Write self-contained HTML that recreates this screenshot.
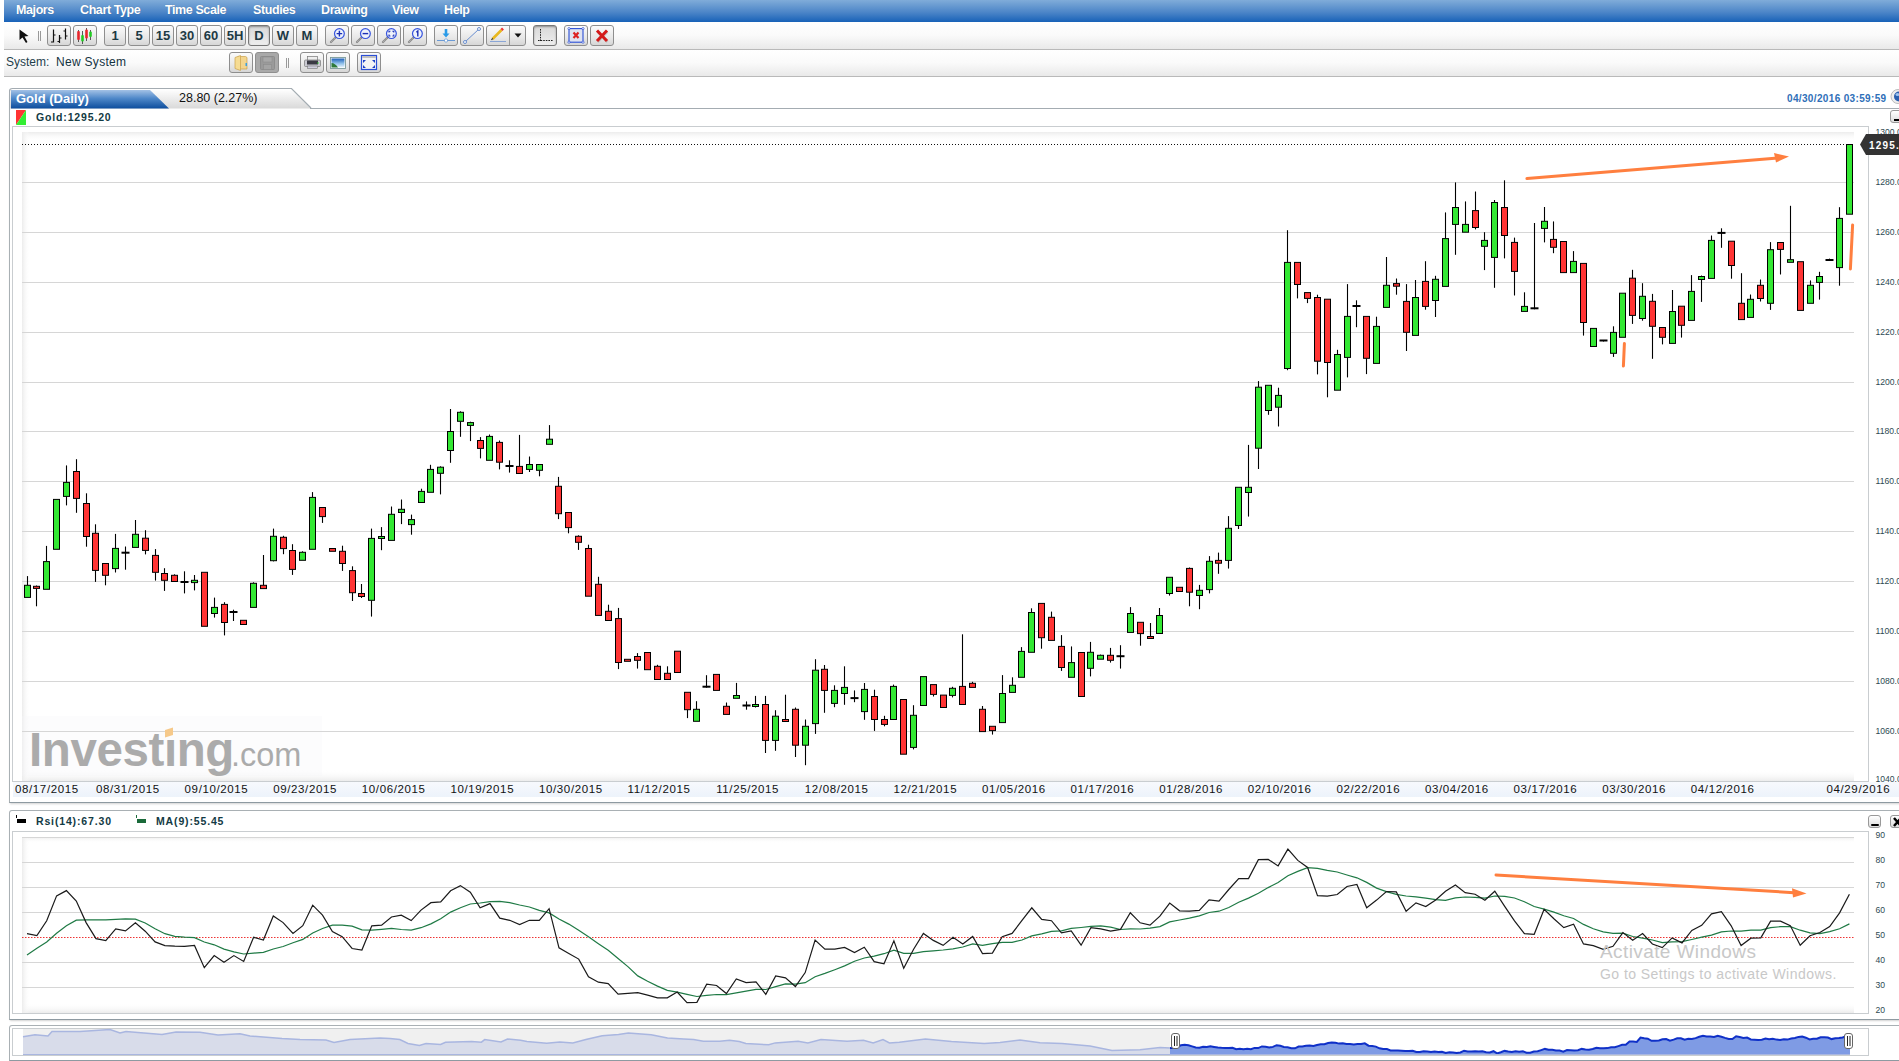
<!DOCTYPE html><html><head><meta charset="utf-8"><style>

*{margin:0;padding:0;box-sizing:border-box}
html,body{width:1899px;height:1061px;overflow:hidden;background:#fff;font-family:"Liberation Sans",sans-serif}
.a{position:absolute}
#menu{left:4px;top:0;width:1895px;height:22px;background:linear-gradient(#80acd9,#4d86c8 55%,#1862b8)}
#menu span{position:absolute;top:3px;color:#fff;font-weight:bold;font-size:12.5px;line-height:14px;letter-spacing:-0.4px;text-shadow:0 0 1px rgba(0,0,0,.25)}
.tb{left:4px;width:1895px;background:linear-gradient(#fff,#fafafa 50%,#e9e9e9);border-bottom:1px solid #b9b9b9}
.btn{position:absolute;height:20px;border:1px solid #8e8e8e;border-radius:3px;background:linear-gradient(#fbfbfb,#e8e8e8 60%,#d6d6d6);font-size:12px;color:#222;text-align:center;line-height:18px}
.btn.pr{background:linear-gradient(#d8d8d8,#eee);border-color:#777;box-shadow:inset 0 1px 2px rgba(0,0,0,.35)}
.sep{position:absolute;width:3px;height:10px;border-left:1px solid #999;border-right:1px solid #999}
.lbl{position:absolute;font-size:10px;color:#2d4f5a;line-height:10px}
.dt{position:absolute;top:783px;font-size:11.5px;color:#111;line-height:12px;letter-spacing:0.62px}

</style></head><body>
<div id="menu" class="a">
<span style="left:12px">Majors</span>
<span style="left:76px">Chart Type</span>
<span style="left:161px">Time Scale</span>
<span style="left:249px">Studies</span>
<span style="left:317px">Drawing</span>
<span style="left:388px">View</span>
<span style="left:440px">Help</span>
</div>
<div class="a tb" style="top:22px;height:28px"></div>
<svg class="a" style="left:18px;top:28px" width="14" height="16" viewBox="0 0 14 16"><path d="M1.5 1.5 L1.5 12 L4.5 9.5 L8 15 L9.5 14 L6.5 8.5 L10.5 8 Z" fill="#111"/></svg>
<div class="sep" style="left:38px;top:31px"></div>
<div class="btn" style="left:47px;top:25px;width:24px;height:21px;"><svg width="22" height="19" viewBox="0 0 22 19" style="display:block"><path d="M5.5 3.5v13M3 16h2.5M5.5 9h2M11.5 9v8M9.5 15.5h2M11.5 12h2M17.5 2.5v11M15.5 5h2M17.5 10h2" stroke="#111" stroke-width="1.2" fill="none"/></svg></div>
<div class="btn" style="left:73px;top:25px;width:24px;height:21px;"><svg width="22" height="19" viewBox="0 0 22 19" style="display:block"><path d="M4.5 4v12M8.5 5v13M12.5 2v13M16.5 4v10" stroke="#333" stroke-width=".8"/><rect x="3.2" y="5" width="2.6" height="9" rx="1" fill="#e8262b"/><rect x="7.2" y="9" width="2.6" height="6.5" rx="1" fill="#22cc22"/><rect x="11.2" y="3.5" width="2.6" height="9" rx="1" fill="#e8262b"/><rect x="15.2" y="5.5" width="2.6" height="5.5" rx="1" fill="#22cc22"/></svg></div>
<div class="btn" style="left:104px;top:25px;width:22px;height:21px;font-size:13px;font-weight:bold;line-height:19px;color:#1d3a44">1</div>
<div class="btn" style="left:128px;top:25px;width:22px;height:21px;font-size:13px;font-weight:bold;line-height:19px;color:#1d3a44">5</div>
<div class="btn" style="left:152px;top:25px;width:22px;height:21px;font-size:13px;font-weight:bold;line-height:19px;color:#1d3a44">15</div>
<div class="btn" style="left:176px;top:25px;width:22px;height:21px;font-size:13px;font-weight:bold;line-height:19px;color:#1d3a44">30</div>
<div class="btn" style="left:200px;top:25px;width:22px;height:21px;font-size:13px;font-weight:bold;line-height:19px;color:#1d3a44">60</div>
<div class="btn" style="left:224px;top:25px;width:22px;height:21px;font-size:13px;font-weight:bold;line-height:19px;color:#1d3a44">5H</div>
<div class="btn pr" style="left:248px;top:25px;width:22px;height:21px;font-size:13px;font-weight:bold;line-height:19px;color:#1d3a44">D</div>
<div class="btn" style="left:272px;top:25px;width:22px;height:21px;font-size:13px;font-weight:bold;line-height:19px;color:#1d3a44">W</div>
<div class="btn" style="left:296px;top:25px;width:22px;height:21px;font-size:13px;font-weight:bold;line-height:19px;color:#1d3a44">M</div>
<div class="btn" style="left:325px;top:25px;width:24px;height:21px;"><svg width="22" height="19" viewBox="0 0 22 19" style="display:block"><path d="M5 16 L9.5 11.5" stroke="#8a8a8a" stroke-width="2.2" stroke-linecap="round"/><path d="M5 16 L9.5 11.5" stroke="#ddd" stroke-width=".6" stroke-dasharray="1 1"/><circle cx="13.4" cy="7.6" r="4.9" fill="#eef2fb" stroke="#3553de" stroke-width="1.2"/><path d="M10.6 7.6h5.6M13.4 4.8v5.6" stroke="#1b2fb6" stroke-width="1.4"/></svg></div>
<div class="btn" style="left:351px;top:25px;width:24px;height:21px;"><svg width="22" height="19" viewBox="0 0 22 19" style="display:block"><path d="M5 16 L9.5 11.5" stroke="#8a8a8a" stroke-width="2.2" stroke-linecap="round"/><path d="M5 16 L9.5 11.5" stroke="#ddd" stroke-width=".6" stroke-dasharray="1 1"/><circle cx="13.4" cy="7.6" r="4.9" fill="#eef2fb" stroke="#3553de" stroke-width="1.2"/><path d="M10.6 7.6h5.6" stroke="#1b2fb6" stroke-width="1.4"/></svg></div>
<div class="btn" style="left:377px;top:25px;width:24px;height:21px;"><svg width="22" height="19" viewBox="0 0 22 19" style="display:block"><path d="M5 16 L9.5 11.5" stroke="#8a8a8a" stroke-width="2.2" stroke-linecap="round"/><path d="M5 16 L9.5 11.5" stroke="#ddd" stroke-width=".6" stroke-dasharray="1 1"/><circle cx="13.4" cy="7.6" r="4.9" fill="#eef2fb" stroke="#3553de" stroke-width="1.2"/><path d="M11 6.6v-1.4h1.4M14.4 5.2h1.4v1.4M15.8 8.6v1.4h-1.4M12.4 10h-1.4v-1.4" stroke="#1b2fb6" stroke-width="1.1" fill="none"/></svg></div>
<div class="btn" style="left:403px;top:25px;width:24px;height:21px;"><svg width="22" height="19" viewBox="0 0 22 19" style="display:block"><path d="M5 16 L9.5 11.5" stroke="#8a8a8a" stroke-width="2.2" stroke-linecap="round"/><path d="M5 16 L9.5 11.5" stroke="#ddd" stroke-width=".6" stroke-dasharray="1 1"/><circle cx="13.4" cy="7.6" r="4.9" fill="#eef2fb" stroke="#3553de" stroke-width="1.2"/><path d="M12.4 6.2 L13.8 5 V10.4" stroke="#1b2fb6" stroke-width="1.4" fill="none"/></svg></div>
<div class="btn" style="left:434px;top:25px;width:24px;height:21px;"><svg width="22" height="19" viewBox="0 0 22 19" style="display:block"><path d="M11 3v5" stroke="#2a9be8" stroke-width="2.6"/><path d="M7.5 7.5 L11 11.5 L14.5 7.5Z" fill="#2a9be8"/><path d="M2 14.5h18" stroke="#6a9ad6" stroke-width="1"/><rect x="9.5" y="13" width="3" height="3" rx="1" fill="#fff" stroke="#6a9ad6" stroke-width=".8"/></svg></div>
<div class="btn" style="left:460px;top:25px;width:24px;height:21px;"><svg width="22" height="19" viewBox="0 0 22 19"><path d="M4 16 L18 3" stroke="#6a8fd0" stroke-width="1"/><circle cx="4" cy="16" r="1.5" fill="#fff" stroke="#6a8fd0"/><circle cx="18" cy="3" r="1.5" fill="#fff" stroke="#6a8fd0"/></svg></div>
<div class="btn" style="left:486px;top:25px;width:40px;height:21px;position:absolute"><svg width="24" height="19" viewBox="0 0 24 19" style="position:absolute;left:0;top:0"><path d="M5.5 13 L14.5 4" stroke="#e8b820" stroke-width="2.6"/><path d="M14.5 4 L16 2.5" stroke="#e33" stroke-width="2.6"/><path d="M4.5 14 l1.2 -1.6" stroke="#333" stroke-width="1.2"/><path d="M3 15.5h16" stroke="#8aa6d6" stroke-width="1"/></svg><div style="position:absolute;left:22px;top:0;width:1px;height:19px;background:#999"></div><svg width="14" height="19" viewBox="0 0 14 19" style="position:absolute;left:24px;top:0"><path d="M3.5 7.5 L10.5 7.5 L7 11.5Z" fill="#111"/></svg></div>
<div class="btn pr" style="left:533px;top:25px;width:24px;height:21px;"><svg width="22" height="19" viewBox="0 0 22 19" style="display:block"><path d="M6.5 3v13M4 14.5h15" stroke="#222" stroke-width="1" stroke-dasharray="1.6 1"/></svg></div>
<div class="btn" style="left:564px;top:25px;width:24px;height:21px;"><svg width="22" height="19" viewBox="0 0 22 19" style="display:block"><rect x="4" y="2.6" width="14" height="13.6" fill="#dfe3f0" stroke="#2b4fd6" stroke-width="1.1"/><circle cx="4" cy="2.6" r="1.1" fill="#fff" stroke="#2b4fd6" stroke-width=".7"/><circle cx="18" cy="2.6" r="1.1" fill="#fff" stroke="#2b4fd6" stroke-width=".7"/><circle cx="4" cy="16.2" r="1.1" fill="#fff" stroke="#2b4fd6" stroke-width=".7"/><circle cx="18" cy="16.2" r="1.1" fill="#fff" stroke="#2b4fd6" stroke-width=".7"/><path d="M8.5 6.5 L13.5 12M13.5 6.5 L8.5 12" stroke="#d22" stroke-width="2.2"/></svg></div>
<div class="btn" style="left:590px;top:25px;width:24px;height:21px;"><svg width="22" height="19" viewBox="0 0 22 19" style="display:block"><path d="M6.5 5.5 L16.5 16M16.5 5.5 L6.5 16" stroke="#999" stroke-width="2.8" opacity=".35"/><path d="M6 4.5 L16 15M16 4.5 L6 15" stroke="#d41a1a" stroke-width="3"/></svg></div>
<div class="a tb" style="top:50px;height:27px"></div>
<div class="a" style="left:6px;top:56px;font-size:12px;color:#1f3f4c;line-height:13px">System:</div>
<div class="a" style="left:56px;top:56px;font-size:12px;color:#14333f;line-height:13px;letter-spacing:0.3px">New System</div>
<div class="btn" style="left:229px;top:52px;width:24px;height:21px;"><svg width="22" height="19" viewBox="0 0 22 19" style="display:block"><path d="M8 3.5h7.5l1.5 1v11.5H8Z" fill="#f3d58e" stroke="#c9a14a" stroke-width=".7"/><path d="M5 4.5 L10.5 2.5 V17.5 L5 15.5Z" fill="#f6dc93" stroke="#c9a14a" stroke-width=".7"/><rect x="15.5" y="10" width="1.5" height="3" fill="#3aa0e0"/></svg></div>
<div class="btn" style="left:255px;top:52px;width:24px;height:21px;background:#a9a9a9;border-color:#8f8f8f"><svg width="22" height="19" viewBox="0 0 22 19" style="display:block"><rect x="4.5" y="3.5" width="14" height="13" rx="1" fill="#9a9a9a" stroke="#888" stroke-width=".8"/><rect x="7" y="4" width="9" height="5" fill="#a8a8a8" stroke="#8c8c8c" stroke-width=".6"/><rect x="7.5" y="11.5" width="8" height="5" fill="#a4a4a4" stroke="#8c8c8c" stroke-width=".6"/></svg></div>
<div class="sep" style="left:286px;top:58px"></div>
<div class="btn" style="left:300px;top:52px;width:24px;height:21px;"><svg width="22" height="19" viewBox="0 0 22 19" style="display:block"><rect x="6.5" y="3.5" width="10" height="4" fill="#eee" stroke="#777" stroke-width=".7"/><rect x="3.5" y="7" width="16" height="6.5" rx="1" fill="#c9c9d2" stroke="#777" stroke-width=".7"/><rect x="6" y="7.5" width="11" height="4" fill="#3a3a44"/><circle cx="17" cy="10" r=".8" fill="#3c3"/><rect x="6.5" y="13" width="10" height="2.5" fill="#d0d0e0" stroke="#777" stroke-width=".6"/></svg></div>
<div class="btn" style="left:326px;top:52px;width:24px;height:21px;"><svg width="22" height="19" viewBox="0 0 22 19" style="display:block"><defs><linearGradient id="gimg" x1="0" y1="0" x2="0" y2="1"><stop offset="0" stop-color="#1d5fb8"/><stop offset=".55" stop-color="#8fc0ea"/><stop offset="1" stop-color="#e8f4fb"/></linearGradient></defs><rect x="3.5" y="4.5" width="15" height="11" fill="#fff" stroke="#7a9a9a" stroke-width=".9"/><rect x="4.5" y="5.5" width="13" height="9" fill="url(#gimg)"/><path d="M4.5 10 Q8 10 11 14.5 H4.5Z" fill="#2f7a3a"/></svg></div>
<div class="btn" style="left:357px;top:52px;width:24px;height:21px;"><svg width="22" height="19" viewBox="0 0 22 19" style="display:block"><rect x="3.5" y="2.5" width="15" height="14" fill="#f4f4f4" stroke="#2b4fd6" stroke-width="1.2"/><rect x="4.2" y="3.2" width="13.6" height="1.6" fill="#b5b5b5"/><path d="M5 7 V10 L8 7Z M17 7 V10 L14 7Z M5 15 V12 L8 15Z M17 15 V12 L14 15Z" fill="#1b3fc6"/></svg></div>
<div class="a" style="left:9px;top:92px;width:1895px;height:711px;border-left:1px solid #a9b0b4;border-bottom:1.5px solid #8e9aa1;box-shadow:0 2px 2px -1px rgba(0,0,0,.18)"></div>
<svg class="a" style="left:9px;top:87px" width="304" height="23" viewBox="0 0 304 23">
<defs><linearGradient id="tabb" x1="0" y1="0" x2="0" y2="1"><stop offset="0" stop-color="#a4c2e6"/><stop offset=".45" stop-color="#4f88c9"/><stop offset="1" stop-color="#0c4c9c"/></linearGradient>
<linearGradient id="tabg" x1="0" y1="0" x2="0" y2="1"><stop offset="0" stop-color="#ffffff"/><stop offset="1" stop-color="#d9d9d9"/></linearGradient></defs>
<path d="M1 21.5 V2 H282.5 L302 21.5 Z" fill="url(#tabg)"/>
<path d="M0.5 23 V4.5 Q0.5 1.5 3.5 1.5 H282.5 L302 21" fill="none" stroke="#a4acb2" stroke-width="1.2"/>
<path d="M2 2.9 H141 L160 21.6 H2Z" fill="url(#tabb)"/>
</svg>
<div class="a" style="left:16px;top:91px;font-size:13px;font-weight:bold;color:#fff;line-height:15px">Gold (Daily)</div>
<div class="a" style="left:179px;top:91px;font-size:12.5px;color:#111;line-height:15px">28.80 (2.27%)</div>
<div class="a" style="left:310px;top:107.5px;width:1589px;height:1.5px;background:#a4acb2"></div>
<svg class="a" style="left:16px;top:110px" width="10" height="15"><path d="M0 0H10L0 15Z" fill="#f33"/><path d="M10 0V15H0Z" fill="#3e3"/></svg>
<div class="a" style="left:36px;top:111px;font-size:10.5px;font-weight:bold;color:#123a44;line-height:12px;letter-spacing:0.85px">Gold:1295.20</div>
<div class="a" style="left:1787px;top:93px;font-size:10px;font-weight:bold;color:#2f6fb8;line-height:11px;letter-spacing:0.35px">04/30/2016 03:59:59</div>
<svg class="a" style="left:1890px;top:89px" width="12" height="15"><circle cx="8" cy="7.5" r="7" fill="#eee" stroke="#bbb"/><circle cx="9" cy="7.5" r="5" fill="#2a5fae"/><ellipse cx="7.5" cy="5.5" rx="2" ry="1.5" fill="#9cc3f0"/></svg>
<div class="a" style="left:1890px;top:110px;width:14px;height:13px;border:1px solid #999;border-radius:3px;background:linear-gradient(#fff,#ddd)"><div style="position:absolute;left:3px;top:8px;width:9px;height:2px;background:#000"></div></div>
<div class="a" style="left:12px;top:126px;width:1857px;height:656px;border:1px solid #c9cdd0;background:#fff"></div>
<div class="a" style="left:13px;top:782px;width:1886px;height:15px;background:linear-gradient(#f7f9fd,#edf3fb)"></div>
<svg class="a" style="left:0;top:0" width="1899" height="1061" viewBox="0 0 1899 1061"><defs>
<linearGradient id="gtop" x1="0" y1="0" x2="0" y2="1"><stop offset="0" stop-color="#ececec"/><stop offset="1" stop-color="#fff" stop-opacity="0"/></linearGradient>
<linearGradient id="gbot" x1="0" y1="0" x2="0" y2="1"><stop offset="0" stop-color="#fff" stop-opacity="0"/><stop offset="1" stop-color="#ececec"/></linearGradient>
<linearGradient id="gleft" x1="0" y1="0" x2="1" y2="0"><stop offset="0" stop-color="#ececec"/><stop offset="1" stop-color="#fff" stop-opacity="0"/></linearGradient>
</defs><rect x="22" y="132" width="1832" height="9" fill="url(#gtop)"/><rect x="22" y="770" width="1832" height="11" fill="url(#gbot)"/><rect x="22" y="132" width="8" height="649" fill="url(#gleft)"/><rect x="22" y="716" width="300" height="60" fill="#f5f5f8" opacity=".3"/><line x1="22" y1="182.5" x2="1854" y2="182.5" stroke="#d6d6d6" stroke-width="1"/><line x1="22" y1="232.5" x2="1854" y2="232.5" stroke="#d6d6d6" stroke-width="1"/><line x1="22" y1="282.5" x2="1854" y2="282.5" stroke="#d6d6d6" stroke-width="1"/><line x1="22" y1="332.5" x2="1854" y2="332.5" stroke="#d6d6d6" stroke-width="1"/><line x1="22" y1="382.5" x2="1854" y2="382.5" stroke="#d6d6d6" stroke-width="1"/><line x1="22" y1="431.5" x2="1854" y2="431.5" stroke="#d6d6d6" stroke-width="1"/><line x1="22" y1="481.5" x2="1854" y2="481.5" stroke="#d6d6d6" stroke-width="1"/><line x1="22" y1="531.5" x2="1854" y2="531.5" stroke="#d6d6d6" stroke-width="1"/><line x1="22" y1="581.5" x2="1854" y2="581.5" stroke="#d6d6d6" stroke-width="1"/><line x1="22" y1="631.5" x2="1854" y2="631.5" stroke="#d6d6d6" stroke-width="1"/><line x1="22" y1="681.5" x2="1854" y2="681.5" stroke="#d6d6d6" stroke-width="1"/><line x1="22" y1="731.5" x2="1854" y2="731.5" stroke="#d6d6d6" stroke-width="1"/><text x="1875.5" y="135.0" font-size="8.6" fill="#2e4a52" font-family="Liberation Sans">1300.0</text><text x="1875.5" y="184.9" font-size="8.6" fill="#2e4a52" font-family="Liberation Sans">1280.0</text><text x="1875.5" y="234.8" font-size="8.6" fill="#2e4a52" font-family="Liberation Sans">1260.0</text><text x="1875.5" y="284.7" font-size="8.6" fill="#2e4a52" font-family="Liberation Sans">1240.0</text><text x="1875.5" y="334.6" font-size="8.6" fill="#2e4a52" font-family="Liberation Sans">1220.0</text><text x="1875.5" y="384.5" font-size="8.6" fill="#2e4a52" font-family="Liberation Sans">1200.0</text><text x="1875.5" y="434.4" font-size="8.6" fill="#2e4a52" font-family="Liberation Sans">1180.0</text><text x="1875.5" y="484.3" font-size="8.6" fill="#2e4a52" font-family="Liberation Sans">1160.0</text><text x="1875.5" y="534.2" font-size="8.6" fill="#2e4a52" font-family="Liberation Sans">1140.0</text><text x="1875.5" y="584.1" font-size="8.6" fill="#2e4a52" font-family="Liberation Sans">1120.0</text><text x="1875.5" y="634.0" font-size="8.6" fill="#2e4a52" font-family="Liberation Sans">1100.0</text><text x="1875.5" y="683.9" font-size="8.6" fill="#2e4a52" font-family="Liberation Sans">1080.0</text><text x="1875.5" y="733.8" font-size="8.6" fill="#2e4a52" font-family="Liberation Sans">1060.0</text><text x="1875.5" y="782.4" font-size="8.6" fill="#2e4a52" font-family="Liberation Sans">1040.0</text><line x1="22" y1="144.5" x2="1854" y2="144.5" stroke="#111" stroke-width="1" stroke-dasharray="1 2"/><line x1="27.5" y1="576.1" x2="27.5" y2="585.3" stroke="#000" stroke-width="1.1"/><rect x="24.5" y="585.3" width="6" height="12.1" fill="#33e833" stroke="#000" stroke-width="1"/><line x1="36.5" y1="585.5" x2="36.5" y2="586.3" stroke="#000" stroke-width="1.1"/><line x1="36.5" y1="588.4" x2="36.5" y2="606.3" stroke="#000" stroke-width="1.1"/><rect x="33.5" y="586.3" width="6" height="2.1" fill="#ff3434" stroke="#000" stroke-width="1"/><line x1="46.5" y1="545.9" x2="46.5" y2="561.6" stroke="#000" stroke-width="1.1"/><rect x="43.5" y="561.6" width="6" height="27.7" fill="#33e833" stroke="#000" stroke-width="1"/><rect x="53.5" y="499.4" width="6" height="49.9" fill="#33e833" stroke="#000" stroke-width="1"/><line x1="66.5" y1="465.4" x2="66.5" y2="482.4" stroke="#000" stroke-width="1.1"/><line x1="66.5" y1="496.4" x2="66.5" y2="505.4" stroke="#000" stroke-width="1.1"/><rect x="63.5" y="482.4" width="6" height="14.0" fill="#33e833" stroke="#000" stroke-width="1"/><line x1="76.5" y1="459.2" x2="76.5" y2="471.5" stroke="#000" stroke-width="1.1"/><line x1="76.5" y1="498.4" x2="76.5" y2="512.8" stroke="#000" stroke-width="1.1"/><rect x="73.5" y="471.5" width="6" height="26.9" fill="#ff3434" stroke="#000" stroke-width="1"/><line x1="86.5" y1="493.3" x2="86.5" y2="503.5" stroke="#000" stroke-width="1.1"/><line x1="86.5" y1="536.5" x2="86.5" y2="546.7" stroke="#000" stroke-width="1.1"/><rect x="83.5" y="503.5" width="6" height="33.0" fill="#ff3434" stroke="#000" stroke-width="1"/><line x1="95.5" y1="524.3" x2="95.5" y2="533.3" stroke="#000" stroke-width="1.1"/><line x1="95.5" y1="570.4" x2="95.5" y2="581.9" stroke="#000" stroke-width="1.1"/><rect x="92.5" y="533.3" width="6" height="37.1" fill="#ff3434" stroke="#000" stroke-width="1"/><line x1="105.5" y1="575.3" x2="105.5" y2="585.3" stroke="#000" stroke-width="1.1"/><rect x="102.5" y="563.5" width="6" height="11.8" fill="#ff3434" stroke="#000" stroke-width="1"/><line x1="115.5" y1="533.9" x2="115.5" y2="548.4" stroke="#000" stroke-width="1.1"/><line x1="115.5" y1="568.6" x2="115.5" y2="572.5" stroke="#000" stroke-width="1.1"/><rect x="112.5" y="548.4" width="6" height="20.2" fill="#33e833" stroke="#000" stroke-width="1"/><line x1="125.5" y1="546.5" x2="125.5" y2="569.7" stroke="#000" stroke-width="1.1"/><line x1="121.5" y1="552.7" x2="129.5" y2="552.7" stroke="#000" stroke-width="2"/><line x1="135.5" y1="520.0" x2="135.5" y2="534.3" stroke="#000" stroke-width="1.1"/><rect x="132.5" y="534.3" width="6" height="13.1" fill="#33e833" stroke="#000" stroke-width="1"/><line x1="145.5" y1="530.2" x2="145.5" y2="538.2" stroke="#000" stroke-width="1.1"/><line x1="145.5" y1="550.4" x2="145.5" y2="554.4" stroke="#000" stroke-width="1.1"/><rect x="142.5" y="538.2" width="6" height="12.2" fill="#ff3434" stroke="#000" stroke-width="1"/><line x1="155.5" y1="549.1" x2="155.5" y2="555.4" stroke="#000" stroke-width="1.1"/><line x1="155.5" y1="572.3" x2="155.5" y2="580.6" stroke="#000" stroke-width="1.1"/><rect x="152.5" y="555.4" width="6" height="16.9" fill="#ff3434" stroke="#000" stroke-width="1"/><line x1="164.5" y1="568.2" x2="164.5" y2="573.5" stroke="#000" stroke-width="1.1"/><line x1="164.5" y1="580.3" x2="164.5" y2="590.9" stroke="#000" stroke-width="1.1"/><rect x="161.5" y="573.5" width="6" height="6.8" fill="#ff3434" stroke="#000" stroke-width="1"/><line x1="174.5" y1="574.3" x2="174.5" y2="575.3" stroke="#000" stroke-width="1.1"/><rect x="171.5" y="575.3" width="6" height="6.2" fill="#ff3434" stroke="#000" stroke-width="1"/><line x1="184.5" y1="571.3" x2="184.5" y2="593.4" stroke="#000" stroke-width="1.1"/><line x1="180.5" y1="582.0" x2="188.5" y2="582.0" stroke="#000" stroke-width="2"/><line x1="194.5" y1="575.0" x2="194.5" y2="580.3" stroke="#000" stroke-width="1.1"/><line x1="194.5" y1="582.6" x2="194.5" y2="590.4" stroke="#000" stroke-width="1.1"/><rect x="191.5" y="580.3" width="6" height="2.3" fill="#33e833" stroke="#000" stroke-width="1"/><rect x="201.5" y="572.3" width="6" height="54.0" fill="#ff3434" stroke="#000" stroke-width="1"/><line x1="214.5" y1="597.6" x2="214.5" y2="607.4" stroke="#000" stroke-width="1.1"/><line x1="214.5" y1="613.5" x2="214.5" y2="617.6" stroke="#000" stroke-width="1.1"/><rect x="211.5" y="607.4" width="6" height="6.1" fill="#33e833" stroke="#000" stroke-width="1"/><line x1="224.5" y1="602.2" x2="224.5" y2="604.4" stroke="#000" stroke-width="1.1"/><line x1="224.5" y1="622.5" x2="224.5" y2="635.4" stroke="#000" stroke-width="1.1"/><rect x="221.5" y="604.4" width="6" height="18.1" fill="#ff3434" stroke="#000" stroke-width="1"/><line x1="233.5" y1="609.7" x2="233.5" y2="621.0" stroke="#000" stroke-width="1.1"/><line x1="229.5" y1="612.0" x2="237.5" y2="612.0" stroke="#000" stroke-width="2"/><rect x="240.5" y="620.3" width="6" height="4.2" fill="#ff3434" stroke="#000" stroke-width="1"/><line x1="253.5" y1="582.3" x2="253.5" y2="583.3" stroke="#000" stroke-width="1.1"/><rect x="250.5" y="583.3" width="6" height="24.1" fill="#33e833" stroke="#000" stroke-width="1"/><line x1="263.5" y1="555.0" x2="263.5" y2="585.3" stroke="#000" stroke-width="1.1"/><rect x="260.5" y="585.3" width="6" height="3.3" fill="#ff3434" stroke="#000" stroke-width="1"/><line x1="273.5" y1="528.6" x2="273.5" y2="536.3" stroke="#000" stroke-width="1.1"/><line x1="273.5" y1="560.7" x2="273.5" y2="561.4" stroke="#000" stroke-width="1.1"/><rect x="270.5" y="536.3" width="6" height="24.4" fill="#33e833" stroke="#000" stroke-width="1"/><line x1="283.5" y1="535.8" x2="283.5" y2="537.3" stroke="#000" stroke-width="1.1"/><line x1="283.5" y1="548.6" x2="283.5" y2="554.2" stroke="#000" stroke-width="1.1"/><rect x="280.5" y="537.3" width="6" height="11.3" fill="#ff3434" stroke="#000" stroke-width="1"/><line x1="292.5" y1="544.2" x2="292.5" y2="550.5" stroke="#000" stroke-width="1.1"/><line x1="292.5" y1="569.4" x2="292.5" y2="574.9" stroke="#000" stroke-width="1.1"/><rect x="289.5" y="550.5" width="6" height="18.9" fill="#ff3434" stroke="#000" stroke-width="1"/><line x1="302.5" y1="551.3" x2="302.5" y2="552.3" stroke="#000" stroke-width="1.1"/><rect x="299.5" y="552.3" width="6" height="8.0" fill="#33e833" stroke="#000" stroke-width="1"/><line x1="312.5" y1="492.1" x2="312.5" y2="497.4" stroke="#000" stroke-width="1.1"/><rect x="309.5" y="497.4" width="6" height="51.9" fill="#33e833" stroke="#000" stroke-width="1"/><line x1="322.5" y1="516.6" x2="322.5" y2="522.9" stroke="#000" stroke-width="1.1"/><rect x="319.5" y="507.5" width="6" height="9.1" fill="#ff3434" stroke="#000" stroke-width="1"/><rect x="329.5" y="548.5" width="6" height="2.8" fill="#ff3434" stroke="#000" stroke-width="1"/><line x1="342.5" y1="545.7" x2="342.5" y2="551.3" stroke="#000" stroke-width="1.1"/><line x1="342.5" y1="563.5" x2="342.5" y2="570.9" stroke="#000" stroke-width="1.1"/><rect x="339.5" y="551.3" width="6" height="12.2" fill="#ff3434" stroke="#000" stroke-width="1"/><line x1="352.5" y1="566.3" x2="352.5" y2="570.6" stroke="#000" stroke-width="1.1"/><line x1="352.5" y1="592.7" x2="352.5" y2="601.0" stroke="#000" stroke-width="1.1"/><rect x="349.5" y="570.6" width="6" height="22.1" fill="#ff3434" stroke="#000" stroke-width="1"/><line x1="361.5" y1="584.0" x2="361.5" y2="593.5" stroke="#000" stroke-width="1.1"/><line x1="361.5" y1="596.5" x2="361.5" y2="598.0" stroke="#000" stroke-width="1.1"/><rect x="358.5" y="593.5" width="6" height="3.0" fill="#ff3434" stroke="#000" stroke-width="1"/><line x1="371.5" y1="528.6" x2="371.5" y2="538.4" stroke="#000" stroke-width="1.1"/><line x1="371.5" y1="600.3" x2="371.5" y2="616.6" stroke="#000" stroke-width="1.1"/><rect x="368.5" y="538.4" width="6" height="61.9" fill="#33e833" stroke="#000" stroke-width="1"/><line x1="381.5" y1="527.1" x2="381.5" y2="536.5" stroke="#000" stroke-width="1.1"/><line x1="381.5" y1="538.4" x2="381.5" y2="550.2" stroke="#000" stroke-width="1.1"/><rect x="378.5" y="536.5" width="6" height="2.0" fill="#33e833" stroke="#000" stroke-width="1"/><line x1="391.5" y1="506.5" x2="391.5" y2="514.3" stroke="#000" stroke-width="1.1"/><rect x="388.5" y="514.3" width="6" height="26.1" fill="#33e833" stroke="#000" stroke-width="1"/><line x1="401.5" y1="499.5" x2="401.5" y2="509.3" stroke="#000" stroke-width="1.1"/><line x1="401.5" y1="512.5" x2="401.5" y2="524.1" stroke="#000" stroke-width="1.1"/><rect x="398.5" y="509.3" width="6" height="3.2" fill="#33e833" stroke="#000" stroke-width="1"/><line x1="411.5" y1="514.6" x2="411.5" y2="519.6" stroke="#000" stroke-width="1.1"/><line x1="411.5" y1="524.6" x2="411.5" y2="534.7" stroke="#000" stroke-width="1.1"/><rect x="408.5" y="519.6" width="6" height="5.0" fill="#33e833" stroke="#000" stroke-width="1"/><line x1="421.5" y1="488.7" x2="421.5" y2="491.4" stroke="#000" stroke-width="1.1"/><rect x="418.5" y="491.4" width="6" height="11.1" fill="#33e833" stroke="#000" stroke-width="1"/><line x1="430.5" y1="464.8" x2="430.5" y2="469.4" stroke="#000" stroke-width="1.1"/><rect x="427.5" y="469.4" width="6" height="22.9" fill="#33e833" stroke="#000" stroke-width="1"/><line x1="440.5" y1="466.3" x2="440.5" y2="467.2" stroke="#000" stroke-width="1.1"/><line x1="440.5" y1="473.3" x2="440.5" y2="494.4" stroke="#000" stroke-width="1.1"/><rect x="437.5" y="467.2" width="6" height="6.1" fill="#33e833" stroke="#000" stroke-width="1"/><line x1="450.5" y1="409.0" x2="450.5" y2="431.5" stroke="#000" stroke-width="1.1"/><line x1="450.5" y1="450.5" x2="450.5" y2="462.8" stroke="#000" stroke-width="1.1"/><rect x="447.5" y="431.5" width="6" height="19.0" fill="#33e833" stroke="#000" stroke-width="1"/><line x1="460.5" y1="411.3" x2="460.5" y2="412.3" stroke="#000" stroke-width="1.1"/><line x1="460.5" y1="421.3" x2="460.5" y2="436.8" stroke="#000" stroke-width="1.1"/><rect x="457.5" y="412.3" width="6" height="9.0" fill="#33e833" stroke="#000" stroke-width="1"/><line x1="470.5" y1="421.7" x2="470.5" y2="422.6" stroke="#000" stroke-width="1.1"/><line x1="470.5" y1="425.4" x2="470.5" y2="441.1" stroke="#000" stroke-width="1.1"/><rect x="467.5" y="422.6" width="6" height="2.8" fill="#33e833" stroke="#000" stroke-width="1"/><line x1="480.5" y1="437.1" x2="480.5" y2="440.5" stroke="#000" stroke-width="1.1"/><line x1="480.5" y1="448.4" x2="480.5" y2="458.4" stroke="#000" stroke-width="1.1"/><rect x="477.5" y="440.5" width="6" height="7.9" fill="#ff3434" stroke="#000" stroke-width="1"/><line x1="489.5" y1="434.5" x2="489.5" y2="436.4" stroke="#000" stroke-width="1.1"/><rect x="486.5" y="436.4" width="6" height="23.9" fill="#33e833" stroke="#000" stroke-width="1"/><line x1="499.5" y1="440.5" x2="499.5" y2="442.4" stroke="#000" stroke-width="1.1"/><line x1="499.5" y1="462.2" x2="499.5" y2="469.4" stroke="#000" stroke-width="1.1"/><rect x="496.5" y="442.4" width="6" height="19.8" fill="#ff3434" stroke="#000" stroke-width="1"/><line x1="509.5" y1="460.3" x2="509.5" y2="472.6" stroke="#000" stroke-width="1.1"/><line x1="505.5" y1="466.0" x2="513.5" y2="466.0" stroke="#000" stroke-width="2"/><line x1="519.5" y1="434.9" x2="519.5" y2="466.4" stroke="#000" stroke-width="1.1"/><rect x="516.5" y="466.4" width="6" height="7.1" fill="#ff3434" stroke="#000" stroke-width="1"/><line x1="529.5" y1="456.5" x2="529.5" y2="464.5" stroke="#000" stroke-width="1.1"/><line x1="529.5" y1="469.4" x2="529.5" y2="472.0" stroke="#000" stroke-width="1.1"/><rect x="526.5" y="464.5" width="6" height="4.9" fill="#33e833" stroke="#000" stroke-width="1"/><line x1="539.5" y1="470.3" x2="539.5" y2="476.3" stroke="#000" stroke-width="1.1"/><rect x="536.5" y="464.5" width="6" height="5.8" fill="#33e833" stroke="#000" stroke-width="1"/><line x1="549.5" y1="425.1" x2="549.5" y2="439.2" stroke="#000" stroke-width="1.1"/><rect x="546.5" y="439.2" width="6" height="5.1" fill="#33e833" stroke="#000" stroke-width="1"/><line x1="558.5" y1="476.9" x2="558.5" y2="486.3" stroke="#000" stroke-width="1.1"/><line x1="558.5" y1="513.7" x2="558.5" y2="519.1" stroke="#000" stroke-width="1.1"/><rect x="555.5" y="486.3" width="6" height="27.4" fill="#ff3434" stroke="#000" stroke-width="1"/><line x1="568.5" y1="527.6" x2="568.5" y2="533.3" stroke="#000" stroke-width="1.1"/><rect x="565.5" y="512.5" width="6" height="15.1" fill="#ff3434" stroke="#000" stroke-width="1"/><line x1="578.5" y1="535.3" x2="578.5" y2="536.3" stroke="#000" stroke-width="1.1"/><line x1="578.5" y1="542.3" x2="578.5" y2="549.9" stroke="#000" stroke-width="1.1"/><rect x="575.5" y="536.3" width="6" height="6.0" fill="#ff3434" stroke="#000" stroke-width="1"/><line x1="588.5" y1="544.7" x2="588.5" y2="548.5" stroke="#000" stroke-width="1.1"/><rect x="585.5" y="548.5" width="6" height="47.7" fill="#ff3434" stroke="#000" stroke-width="1"/><line x1="598.5" y1="576.8" x2="598.5" y2="584.3" stroke="#000" stroke-width="1.1"/><rect x="595.5" y="584.3" width="6" height="31.1" fill="#ff3434" stroke="#000" stroke-width="1"/><line x1="608.5" y1="604.7" x2="608.5" y2="611.3" stroke="#000" stroke-width="1.1"/><rect x="605.5" y="611.3" width="6" height="9.2" fill="#ff3434" stroke="#000" stroke-width="1"/><line x1="618.5" y1="607.9" x2="618.5" y2="618.6" stroke="#000" stroke-width="1.1"/><line x1="618.5" y1="662.5" x2="618.5" y2="669.1" stroke="#000" stroke-width="1.1"/><rect x="615.5" y="618.6" width="6" height="43.9" fill="#ff3434" stroke="#000" stroke-width="1"/><rect x="624.5" y="659.3" width="6" height="2.0" fill="#ff3434" stroke="#000" stroke-width="1"/><line x1="637.5" y1="653.1" x2="637.5" y2="656.5" stroke="#000" stroke-width="1.1"/><line x1="637.5" y1="660.3" x2="637.5" y2="668.6" stroke="#000" stroke-width="1.1"/><rect x="634.5" y="656.5" width="6" height="3.8" fill="#ff3434" stroke="#000" stroke-width="1"/><rect x="644.5" y="652.5" width="6" height="17.2" fill="#ff3434" stroke="#000" stroke-width="1"/><line x1="657.5" y1="664.8" x2="657.5" y2="666.3" stroke="#000" stroke-width="1.1"/><rect x="654.5" y="666.3" width="6" height="13.2" fill="#ff3434" stroke="#000" stroke-width="1"/><line x1="667.5" y1="666.3" x2="667.5" y2="673.3" stroke="#000" stroke-width="1.1"/><rect x="664.5" y="673.3" width="6" height="6.2" fill="#ff3434" stroke="#000" stroke-width="1"/><rect x="674.5" y="651.2" width="6" height="21.3" fill="#ff3434" stroke="#000" stroke-width="1"/><line x1="687.5" y1="709.7" x2="687.5" y2="718.1" stroke="#000" stroke-width="1.1"/><rect x="684.5" y="692.3" width="6" height="17.4" fill="#ff3434" stroke="#000" stroke-width="1"/><line x1="696.5" y1="701.2" x2="696.5" y2="709.3" stroke="#000" stroke-width="1.1"/><rect x="693.5" y="709.3" width="6" height="12.0" fill="#33e833" stroke="#000" stroke-width="1"/><line x1="706.5" y1="675.2" x2="706.5" y2="687.7" stroke="#000" stroke-width="1.1"/><line x1="702.5" y1="686.7" x2="710.5" y2="686.7" stroke="#000" stroke-width="2"/><rect x="713.5" y="674.4" width="6" height="16.0" fill="#ff3434" stroke="#000" stroke-width="1"/><line x1="726.5" y1="702.5" x2="726.5" y2="706.3" stroke="#000" stroke-width="1.1"/><rect x="723.5" y="706.3" width="6" height="8.1" fill="#ff3434" stroke="#000" stroke-width="1"/><line x1="736.5" y1="682.9" x2="736.5" y2="695.5" stroke="#000" stroke-width="1.1"/><rect x="733.5" y="695.5" width="6" height="2.8" fill="#33e833" stroke="#000" stroke-width="1"/><line x1="746.5" y1="701.4" x2="746.5" y2="709.7" stroke="#000" stroke-width="1.1"/><line x1="742.5" y1="705.5" x2="750.5" y2="705.5" stroke="#000" stroke-width="2"/><line x1="755.5" y1="695.9" x2="755.5" y2="704.5" stroke="#000" stroke-width="1.1"/><line x1="755.5" y1="706.4" x2="755.5" y2="707.5" stroke="#000" stroke-width="1.1"/><rect x="752.5" y="704.5" width="6" height="2.0" fill="#33e833" stroke="#000" stroke-width="1"/><line x1="765.5" y1="695.9" x2="765.5" y2="704.5" stroke="#000" stroke-width="1.1"/><line x1="765.5" y1="740.4" x2="765.5" y2="753.0" stroke="#000" stroke-width="1.1"/><rect x="762.5" y="704.5" width="6" height="35.9" fill="#ff3434" stroke="#000" stroke-width="1"/><line x1="775.5" y1="710.2" x2="775.5" y2="716.2" stroke="#000" stroke-width="1.1"/><line x1="775.5" y1="740.4" x2="775.5" y2="750.8" stroke="#000" stroke-width="1.1"/><rect x="772.5" y="716.2" width="6" height="24.2" fill="#33e833" stroke="#000" stroke-width="1"/><line x1="785.5" y1="694.7" x2="785.5" y2="719.5" stroke="#000" stroke-width="1.1"/><rect x="782.5" y="719.5" width="6" height="2.0" fill="#ff3434" stroke="#000" stroke-width="1"/><line x1="795.5" y1="707.5" x2="795.5" y2="709.3" stroke="#000" stroke-width="1.1"/><line x1="795.5" y1="745.2" x2="795.5" y2="757.0" stroke="#000" stroke-width="1.1"/><rect x="792.5" y="709.3" width="6" height="35.9" fill="#ff3434" stroke="#000" stroke-width="1"/><line x1="805.5" y1="719.5" x2="805.5" y2="726.3" stroke="#000" stroke-width="1.1"/><line x1="805.5" y1="745.2" x2="805.5" y2="765.2" stroke="#000" stroke-width="1.1"/><rect x="802.5" y="726.3" width="6" height="18.9" fill="#33e833" stroke="#000" stroke-width="1"/><line x1="815.5" y1="659.2" x2="815.5" y2="670.2" stroke="#000" stroke-width="1.1"/><line x1="815.5" y1="723.6" x2="815.5" y2="733.9" stroke="#000" stroke-width="1.1"/><rect x="812.5" y="670.2" width="6" height="53.4" fill="#33e833" stroke="#000" stroke-width="1"/><line x1="824.5" y1="665.0" x2="824.5" y2="669.3" stroke="#000" stroke-width="1.1"/><line x1="824.5" y1="690.4" x2="824.5" y2="712.8" stroke="#000" stroke-width="1.1"/><rect x="821.5" y="669.3" width="6" height="21.1" fill="#ff3434" stroke="#000" stroke-width="1"/><line x1="834.5" y1="685.3" x2="834.5" y2="690.4" stroke="#000" stroke-width="1.1"/><line x1="834.5" y1="703.4" x2="834.5" y2="707.2" stroke="#000" stroke-width="1.1"/><rect x="831.5" y="690.4" width="6" height="13.0" fill="#33e833" stroke="#000" stroke-width="1"/><line x1="844.5" y1="666.3" x2="844.5" y2="687.4" stroke="#000" stroke-width="1.1"/><line x1="844.5" y1="693.5" x2="844.5" y2="704.8" stroke="#000" stroke-width="1.1"/><rect x="841.5" y="687.4" width="6" height="6.1" fill="#33e833" stroke="#000" stroke-width="1"/><line x1="854.5" y1="690.4" x2="854.5" y2="702.2" stroke="#000" stroke-width="1.1"/><line x1="850.5" y1="698.1" x2="858.5" y2="698.1" stroke="#000" stroke-width="2"/><line x1="864.5" y1="683.0" x2="864.5" y2="689.4" stroke="#000" stroke-width="1.1"/><line x1="864.5" y1="711.6" x2="864.5" y2="719.8" stroke="#000" stroke-width="1.1"/><rect x="861.5" y="689.4" width="6" height="22.2" fill="#33e833" stroke="#000" stroke-width="1"/><line x1="874.5" y1="689.7" x2="874.5" y2="696.5" stroke="#000" stroke-width="1.1"/><line x1="874.5" y1="719.5" x2="874.5" y2="730.9" stroke="#000" stroke-width="1.1"/><rect x="871.5" y="696.5" width="6" height="23.0" fill="#ff3434" stroke="#000" stroke-width="1"/><line x1="884.5" y1="715.8" x2="884.5" y2="719.5" stroke="#000" stroke-width="1.1"/><line x1="884.5" y1="724.4" x2="884.5" y2="726.3" stroke="#000" stroke-width="1.1"/><rect x="881.5" y="719.5" width="6" height="4.9" fill="#ff3434" stroke="#000" stroke-width="1"/><line x1="893.5" y1="684.6" x2="893.5" y2="686.4" stroke="#000" stroke-width="1.1"/><rect x="890.5" y="686.4" width="6" height="33.1" fill="#33e833" stroke="#000" stroke-width="1"/><rect x="900.5" y="699.5" width="6" height="54.7" fill="#ff3434" stroke="#000" stroke-width="1"/><line x1="913.5" y1="705.2" x2="913.5" y2="715.3" stroke="#000" stroke-width="1.1"/><line x1="913.5" y1="747.4" x2="913.5" y2="749.4" stroke="#000" stroke-width="1.1"/><rect x="910.5" y="715.3" width="6" height="32.1" fill="#33e833" stroke="#000" stroke-width="1"/><rect x="920.5" y="676.6" width="6" height="28.9" fill="#33e833" stroke="#000" stroke-width="1"/><line x1="933.5" y1="694.4" x2="933.5" y2="696.5" stroke="#000" stroke-width="1.1"/><rect x="930.5" y="684.6" width="6" height="9.8" fill="#ff3434" stroke="#000" stroke-width="1"/><rect x="940.5" y="695.1" width="6" height="12.4" fill="#ff3434" stroke="#000" stroke-width="1"/><line x1="952.5" y1="686.8" x2="952.5" y2="688.3" stroke="#000" stroke-width="1.1"/><line x1="952.5" y1="695.4" x2="952.5" y2="697.4" stroke="#000" stroke-width="1.1"/><rect x="949.5" y="688.3" width="6" height="7.1" fill="#33e833" stroke="#000" stroke-width="1"/><line x1="962.5" y1="634.3" x2="962.5" y2="686.4" stroke="#000" stroke-width="1.1"/><rect x="959.5" y="686.4" width="6" height="18.1" fill="#ff3434" stroke="#000" stroke-width="1"/><line x1="972.5" y1="681.8" x2="972.5" y2="683.3" stroke="#000" stroke-width="1.1"/><rect x="969.5" y="683.3" width="6" height="4.1" fill="#ff3434" stroke="#000" stroke-width="1"/><line x1="982.5" y1="706.0" x2="982.5" y2="709.3" stroke="#000" stroke-width="1.1"/><rect x="979.5" y="709.3" width="6" height="22.3" fill="#ff3434" stroke="#000" stroke-width="1"/><line x1="992.5" y1="730.6" x2="992.5" y2="734.6" stroke="#000" stroke-width="1.1"/><rect x="989.5" y="726.3" width="6" height="4.3" fill="#ff3434" stroke="#000" stroke-width="1"/><line x1="1002.5" y1="675.1" x2="1002.5" y2="693.5" stroke="#000" stroke-width="1.1"/><rect x="999.5" y="693.5" width="6" height="29.1" fill="#33e833" stroke="#000" stroke-width="1"/><line x1="1012.5" y1="677.3" x2="1012.5" y2="685.3" stroke="#000" stroke-width="1.1"/><rect x="1009.5" y="685.3" width="6" height="7.1" fill="#33e833" stroke="#000" stroke-width="1"/><line x1="1021.5" y1="647.1" x2="1021.5" y2="651.4" stroke="#000" stroke-width="1.1"/><rect x="1018.5" y="651.4" width="6" height="25.9" fill="#33e833" stroke="#000" stroke-width="1"/><line x1="1031.5" y1="608.3" x2="1031.5" y2="612.5" stroke="#000" stroke-width="1.1"/><rect x="1028.5" y="612.5" width="6" height="39.8" fill="#33e833" stroke="#000" stroke-width="1"/><line x1="1041.5" y1="637.7" x2="1041.5" y2="648.7" stroke="#000" stroke-width="1.1"/><rect x="1038.5" y="603.4" width="6" height="34.3" fill="#ff3434" stroke="#000" stroke-width="1"/><line x1="1051.5" y1="611.6" x2="1051.5" y2="617.3" stroke="#000" stroke-width="1.1"/><rect x="1048.5" y="617.3" width="6" height="23.1" fill="#ff3434" stroke="#000" stroke-width="1"/><line x1="1061.5" y1="635.1" x2="1061.5" y2="646.4" stroke="#000" stroke-width="1.1"/><line x1="1061.5" y1="667.5" x2="1061.5" y2="670.9" stroke="#000" stroke-width="1.1"/><rect x="1058.5" y="646.4" width="6" height="21.1" fill="#ff3434" stroke="#000" stroke-width="1"/><line x1="1071.5" y1="646.4" x2="1071.5" y2="662.6" stroke="#000" stroke-width="1.1"/><rect x="1068.5" y="662.6" width="6" height="14.7" fill="#33e833" stroke="#000" stroke-width="1"/><rect x="1078.5" y="652.5" width="6" height="44.0" fill="#ff3434" stroke="#000" stroke-width="1"/><line x1="1090.5" y1="641.9" x2="1090.5" y2="652.3" stroke="#000" stroke-width="1.1"/><line x1="1090.5" y1="668.3" x2="1090.5" y2="676.4" stroke="#000" stroke-width="1.1"/><rect x="1087.5" y="652.3" width="6" height="16.0" fill="#33e833" stroke="#000" stroke-width="1"/><line x1="1100.5" y1="654.6" x2="1100.5" y2="655.3" stroke="#000" stroke-width="1.1"/><rect x="1097.5" y="655.3" width="6" height="3.9" fill="#33e833" stroke="#000" stroke-width="1"/><line x1="1110.5" y1="647.9" x2="1110.5" y2="655.3" stroke="#000" stroke-width="1.1"/><line x1="1110.5" y1="660.3" x2="1110.5" y2="662.6" stroke="#000" stroke-width="1.1"/><rect x="1107.5" y="655.3" width="6" height="5.0" fill="#ff3434" stroke="#000" stroke-width="1"/><line x1="1120.5" y1="645.2" x2="1120.5" y2="668.6" stroke="#000" stroke-width="1.1"/><line x1="1116.5" y1="656.2" x2="1124.5" y2="656.2" stroke="#000" stroke-width="2"/><line x1="1130.5" y1="607.1" x2="1130.5" y2="613.5" stroke="#000" stroke-width="1.1"/><rect x="1127.5" y="613.5" width="6" height="18.9" fill="#33e833" stroke="#000" stroke-width="1"/><line x1="1140.5" y1="633.6" x2="1140.5" y2="645.7" stroke="#000" stroke-width="1.1"/><rect x="1137.5" y="622.3" width="6" height="11.3" fill="#ff3434" stroke="#000" stroke-width="1"/><line x1="1150.5" y1="623.0" x2="1150.5" y2="636.5" stroke="#000" stroke-width="1.1"/><rect x="1147.5" y="636.5" width="6" height="2.0" fill="#ff3434" stroke="#000" stroke-width="1"/><line x1="1159.5" y1="608.0" x2="1159.5" y2="615.5" stroke="#000" stroke-width="1.1"/><rect x="1156.5" y="615.5" width="6" height="18.0" fill="#33e833" stroke="#000" stroke-width="1"/><line x1="1169.5" y1="593.5" x2="1169.5" y2="595.6" stroke="#000" stroke-width="1.1"/><rect x="1166.5" y="577.3" width="6" height="16.2" fill="#33e833" stroke="#000" stroke-width="1"/><rect x="1176.5" y="587.3" width="6" height="4.2" fill="#ff3434" stroke="#000" stroke-width="1"/><line x1="1189.5" y1="567.5" x2="1189.5" y2="568.4" stroke="#000" stroke-width="1.1"/><line x1="1189.5" y1="592.2" x2="1189.5" y2="606.3" stroke="#000" stroke-width="1.1"/><rect x="1186.5" y="568.4" width="6" height="23.8" fill="#ff3434" stroke="#000" stroke-width="1"/><line x1="1199.5" y1="584.9" x2="1199.5" y2="590.3" stroke="#000" stroke-width="1.1"/><line x1="1199.5" y1="595.5" x2="1199.5" y2="609.2" stroke="#000" stroke-width="1.1"/><rect x="1196.5" y="590.3" width="6" height="5.2" fill="#33e833" stroke="#000" stroke-width="1"/><line x1="1209.5" y1="556.1" x2="1209.5" y2="561.3" stroke="#000" stroke-width="1.1"/><line x1="1209.5" y1="589.6" x2="1209.5" y2="593.4" stroke="#000" stroke-width="1.1"/><rect x="1206.5" y="561.3" width="6" height="28.3" fill="#33e833" stroke="#000" stroke-width="1"/><line x1="1218.5" y1="552.6" x2="1218.5" y2="560.4" stroke="#000" stroke-width="1.1"/><line x1="1218.5" y1="563.2" x2="1218.5" y2="573.8" stroke="#000" stroke-width="1.1"/><rect x="1215.5" y="560.4" width="6" height="2.8" fill="#ff3434" stroke="#000" stroke-width="1"/><line x1="1228.5" y1="516.1" x2="1228.5" y2="528.3" stroke="#000" stroke-width="1.1"/><line x1="1228.5" y1="560.4" x2="1228.5" y2="568.6" stroke="#000" stroke-width="1.1"/><rect x="1225.5" y="528.3" width="6" height="32.1" fill="#33e833" stroke="#000" stroke-width="1"/><line x1="1238.5" y1="525.5" x2="1238.5" y2="529.0" stroke="#000" stroke-width="1.1"/><rect x="1235.5" y="487.3" width="6" height="38.2" fill="#33e833" stroke="#000" stroke-width="1"/><line x1="1248.5" y1="444.9" x2="1248.5" y2="487.3" stroke="#000" stroke-width="1.1"/><line x1="1248.5" y1="492.5" x2="1248.5" y2="516.6" stroke="#000" stroke-width="1.1"/><rect x="1245.5" y="487.3" width="6" height="5.2" fill="#33e833" stroke="#000" stroke-width="1"/><line x1="1258.5" y1="381.1" x2="1258.5" y2="387.2" stroke="#000" stroke-width="1.1"/><line x1="1258.5" y1="448.2" x2="1258.5" y2="469.0" stroke="#000" stroke-width="1.1"/><rect x="1255.5" y="387.2" width="6" height="61.0" fill="#33e833" stroke="#000" stroke-width="1"/><line x1="1268.5" y1="410.5" x2="1268.5" y2="414.8" stroke="#000" stroke-width="1.1"/><rect x="1265.5" y="385.3" width="6" height="25.2" fill="#33e833" stroke="#000" stroke-width="1"/><line x1="1278.5" y1="387.7" x2="1278.5" y2="395.4" stroke="#000" stroke-width="1.1"/><line x1="1278.5" y1="407.2" x2="1278.5" y2="426.5" stroke="#000" stroke-width="1.1"/><rect x="1275.5" y="395.4" width="6" height="11.8" fill="#33e833" stroke="#000" stroke-width="1"/><line x1="1287.5" y1="230.2" x2="1287.5" y2="262.4" stroke="#000" stroke-width="1.1"/><line x1="1287.5" y1="368.5" x2="1287.5" y2="370.2" stroke="#000" stroke-width="1.1"/><rect x="1284.5" y="262.4" width="6" height="106.1" fill="#33e833" stroke="#000" stroke-width="1"/><line x1="1297.5" y1="284.5" x2="1297.5" y2="298.4" stroke="#000" stroke-width="1.1"/><rect x="1294.5" y="262.4" width="6" height="22.1" fill="#ff3434" stroke="#000" stroke-width="1"/><line x1="1307.5" y1="298.4" x2="1307.5" y2="303.1" stroke="#000" stroke-width="1.1"/><rect x="1304.5" y="292.6" width="6" height="5.8" fill="#ff3434" stroke="#000" stroke-width="1"/><line x1="1317.5" y1="294.7" x2="1317.5" y2="297.5" stroke="#000" stroke-width="1.1"/><line x1="1317.5" y1="361.2" x2="1317.5" y2="374.4" stroke="#000" stroke-width="1.1"/><rect x="1314.5" y="297.5" width="6" height="63.7" fill="#ff3434" stroke="#000" stroke-width="1"/><line x1="1327.5" y1="362.5" x2="1327.5" y2="397.3" stroke="#000" stroke-width="1.1"/><rect x="1324.5" y="299.2" width="6" height="63.3" fill="#ff3434" stroke="#000" stroke-width="1"/><line x1="1337.5" y1="349.8" x2="1337.5" y2="354.5" stroke="#000" stroke-width="1.1"/><rect x="1334.5" y="354.5" width="6" height="35.7" fill="#33e833" stroke="#000" stroke-width="1"/><line x1="1347.5" y1="284.1" x2="1347.5" y2="316.4" stroke="#000" stroke-width="1.1"/><line x1="1347.5" y1="357.4" x2="1347.5" y2="377.4" stroke="#000" stroke-width="1.1"/><rect x="1344.5" y="316.4" width="6" height="41.0" fill="#33e833" stroke="#000" stroke-width="1"/><line x1="1356.5" y1="300.3" x2="1356.5" y2="327.2" stroke="#000" stroke-width="1.1"/><line x1="1352.5" y1="306.0" x2="1360.5" y2="306.0" stroke="#000" stroke-width="2"/><line x1="1366.5" y1="358.3" x2="1366.5" y2="374.1" stroke="#000" stroke-width="1.1"/><rect x="1363.5" y="316.4" width="6" height="41.9" fill="#ff3434" stroke="#000" stroke-width="1"/><line x1="1376.5" y1="316.7" x2="1376.5" y2="326.4" stroke="#000" stroke-width="1.1"/><rect x="1373.5" y="326.4" width="6" height="37.0" fill="#33e833" stroke="#000" stroke-width="1"/><line x1="1386.5" y1="257.0" x2="1386.5" y2="285.3" stroke="#000" stroke-width="1.1"/><rect x="1383.5" y="285.3" width="6" height="22.1" fill="#33e833" stroke="#000" stroke-width="1"/><line x1="1396.5" y1="278.5" x2="1396.5" y2="283.6" stroke="#000" stroke-width="1.1"/><line x1="1396.5" y1="286.2" x2="1396.5" y2="294.7" stroke="#000" stroke-width="1.1"/><rect x="1393.5" y="283.6" width="6" height="2.6" fill="#ff3434" stroke="#000" stroke-width="1"/><line x1="1406.5" y1="284.1" x2="1406.5" y2="301.4" stroke="#000" stroke-width="1.1"/><line x1="1406.5" y1="332.3" x2="1406.5" y2="351.0" stroke="#000" stroke-width="1.1"/><rect x="1403.5" y="301.4" width="6" height="30.9" fill="#ff3434" stroke="#000" stroke-width="1"/><line x1="1415.5" y1="280.0" x2="1415.5" y2="297.5" stroke="#000" stroke-width="1.1"/><rect x="1412.5" y="297.5" width="6" height="37.9" fill="#33e833" stroke="#000" stroke-width="1"/><line x1="1425.5" y1="261.2" x2="1425.5" y2="281.4" stroke="#000" stroke-width="1.1"/><line x1="1425.5" y1="306.4" x2="1425.5" y2="309.7" stroke="#000" stroke-width="1.1"/><rect x="1422.5" y="281.4" width="6" height="25.0" fill="#ff3434" stroke="#000" stroke-width="1"/><line x1="1435.5" y1="275.8" x2="1435.5" y2="279.3" stroke="#000" stroke-width="1.1"/><line x1="1435.5" y1="300.5" x2="1435.5" y2="317.0" stroke="#000" stroke-width="1.1"/><rect x="1432.5" y="279.3" width="6" height="21.2" fill="#33e833" stroke="#000" stroke-width="1"/><line x1="1445.5" y1="212.4" x2="1445.5" y2="238.6" stroke="#000" stroke-width="1.1"/><rect x="1442.5" y="238.6" width="6" height="47.8" fill="#33e833" stroke="#000" stroke-width="1"/><line x1="1455.5" y1="182.4" x2="1455.5" y2="207.5" stroke="#000" stroke-width="1.1"/><line x1="1455.5" y1="224.4" x2="1455.5" y2="254.8" stroke="#000" stroke-width="1.1"/><rect x="1452.5" y="207.5" width="6" height="16.9" fill="#33e833" stroke="#000" stroke-width="1"/><line x1="1465.5" y1="201.4" x2="1465.5" y2="224.4" stroke="#000" stroke-width="1.1"/><rect x="1462.5" y="224.4" width="6" height="7.8" fill="#33e833" stroke="#000" stroke-width="1"/><line x1="1475.5" y1="191.5" x2="1475.5" y2="210.6" stroke="#000" stroke-width="1.1"/><line x1="1475.5" y1="227.5" x2="1475.5" y2="229.4" stroke="#000" stroke-width="1.1"/><rect x="1472.5" y="210.6" width="6" height="16.9" fill="#ff3434" stroke="#000" stroke-width="1"/><line x1="1484.5" y1="232.2" x2="1484.5" y2="240.4" stroke="#000" stroke-width="1.1"/><line x1="1484.5" y1="246.3" x2="1484.5" y2="270.1" stroke="#000" stroke-width="1.1"/><rect x="1481.5" y="240.4" width="6" height="5.9" fill="#33e833" stroke="#000" stroke-width="1"/><line x1="1494.5" y1="200.0" x2="1494.5" y2="202.5" stroke="#000" stroke-width="1.1"/><line x1="1494.5" y1="257.4" x2="1494.5" y2="287.8" stroke="#000" stroke-width="1.1"/><rect x="1491.5" y="202.5" width="6" height="54.9" fill="#33e833" stroke="#000" stroke-width="1"/><line x1="1504.5" y1="180.3" x2="1504.5" y2="207.5" stroke="#000" stroke-width="1.1"/><line x1="1504.5" y1="235.5" x2="1504.5" y2="258.4" stroke="#000" stroke-width="1.1"/><rect x="1501.5" y="207.5" width="6" height="28.0" fill="#ff3434" stroke="#000" stroke-width="1"/><line x1="1514.5" y1="237.6" x2="1514.5" y2="242.4" stroke="#000" stroke-width="1.1"/><line x1="1514.5" y1="271.4" x2="1514.5" y2="295.5" stroke="#000" stroke-width="1.1"/><rect x="1511.5" y="242.4" width="6" height="29.0" fill="#ff3434" stroke="#000" stroke-width="1"/><line x1="1524.5" y1="292.3" x2="1524.5" y2="306.4" stroke="#000" stroke-width="1.1"/><rect x="1521.5" y="306.4" width="6" height="5.0" fill="#33e833" stroke="#000" stroke-width="1"/><line x1="1534.5" y1="223.0" x2="1534.5" y2="309.3" stroke="#000" stroke-width="1.1"/><line x1="1530.5" y1="308.3" x2="1538.5" y2="308.3" stroke="#000" stroke-width="2"/><line x1="1544.5" y1="207.0" x2="1544.5" y2="221.3" stroke="#000" stroke-width="1.1"/><line x1="1544.5" y1="228.4" x2="1544.5" y2="242.4" stroke="#000" stroke-width="1.1"/><rect x="1541.5" y="221.3" width="6" height="7.1" fill="#33e833" stroke="#000" stroke-width="1"/><line x1="1553.5" y1="221.4" x2="1553.5" y2="239.4" stroke="#000" stroke-width="1.1"/><line x1="1553.5" y1="247.3" x2="1553.5" y2="253.2" stroke="#000" stroke-width="1.1"/><rect x="1550.5" y="239.4" width="6" height="7.9" fill="#ff3434" stroke="#000" stroke-width="1"/><rect x="1560.5" y="241.5" width="6" height="31.1" fill="#ff3434" stroke="#000" stroke-width="1"/><line x1="1573.5" y1="251.1" x2="1573.5" y2="261.4" stroke="#000" stroke-width="1.1"/><rect x="1570.5" y="261.4" width="6" height="11.2" fill="#33e833" stroke="#000" stroke-width="1"/><line x1="1583.5" y1="322.5" x2="1583.5" y2="335.6" stroke="#000" stroke-width="1.1"/><rect x="1580.5" y="263.4" width="6" height="59.1" fill="#ff3434" stroke="#000" stroke-width="1"/><rect x="1590.5" y="328.4" width="6" height="18.1" fill="#33e833" stroke="#000" stroke-width="1"/><line x1="1603.5" y1="340.5" x2="1603.5" y2="341.5" stroke="#000" stroke-width="1.1"/><line x1="1599.5" y1="340.5" x2="1607.5" y2="340.5" stroke="#000" stroke-width="2"/><line x1="1613.5" y1="326.3" x2="1613.5" y2="332.4" stroke="#000" stroke-width="1.1"/><line x1="1613.5" y1="353.3" x2="1613.5" y2="356.9" stroke="#000" stroke-width="1.1"/><rect x="1610.5" y="332.4" width="6" height="20.9" fill="#33e833" stroke="#000" stroke-width="1"/><rect x="1619.5" y="293.2" width="6" height="44.1" fill="#33e833" stroke="#000" stroke-width="1"/><line x1="1632.5" y1="269.8" x2="1632.5" y2="278.2" stroke="#000" stroke-width="1.1"/><line x1="1632.5" y1="315.4" x2="1632.5" y2="323.9" stroke="#000" stroke-width="1.1"/><rect x="1629.5" y="278.2" width="6" height="37.2" fill="#ff3434" stroke="#000" stroke-width="1"/><line x1="1642.5" y1="283.2" x2="1642.5" y2="296.3" stroke="#000" stroke-width="1.1"/><line x1="1642.5" y1="318.5" x2="1642.5" y2="320.7" stroke="#000" stroke-width="1.1"/><rect x="1639.5" y="296.3" width="6" height="22.2" fill="#33e833" stroke="#000" stroke-width="1"/><line x1="1652.5" y1="293.9" x2="1652.5" y2="301.3" stroke="#000" stroke-width="1.1"/><line x1="1652.5" y1="326.3" x2="1652.5" y2="358.8" stroke="#000" stroke-width="1.1"/><rect x="1649.5" y="301.3" width="6" height="25.0" fill="#ff3434" stroke="#000" stroke-width="1"/><line x1="1662.5" y1="337.3" x2="1662.5" y2="344.4" stroke="#000" stroke-width="1.1"/><rect x="1659.5" y="327.5" width="6" height="9.8" fill="#ff3434" stroke="#000" stroke-width="1"/><line x1="1672.5" y1="290.0" x2="1672.5" y2="311.5" stroke="#000" stroke-width="1.1"/><rect x="1669.5" y="311.5" width="6" height="31.9" fill="#33e833" stroke="#000" stroke-width="1"/><line x1="1681.5" y1="325.3" x2="1681.5" y2="337.6" stroke="#000" stroke-width="1.1"/><rect x="1678.5" y="306.2" width="6" height="19.1" fill="#ff3434" stroke="#000" stroke-width="1"/><line x1="1691.5" y1="275.1" x2="1691.5" y2="291.4" stroke="#000" stroke-width="1.1"/><rect x="1688.5" y="291.4" width="6" height="29.0" fill="#33e833" stroke="#000" stroke-width="1"/><line x1="1701.5" y1="275.5" x2="1701.5" y2="276.5" stroke="#000" stroke-width="1.1"/><line x1="1701.5" y1="279.5" x2="1701.5" y2="301.9" stroke="#000" stroke-width="1.1"/><rect x="1698.5" y="276.5" width="6" height="3.0" fill="#33e833" stroke="#000" stroke-width="1"/><line x1="1711.5" y1="235.5" x2="1711.5" y2="240.4" stroke="#000" stroke-width="1.1"/><rect x="1708.5" y="240.4" width="6" height="38.0" fill="#33e833" stroke="#000" stroke-width="1"/><line x1="1721.5" y1="228.3" x2="1721.5" y2="247.8" stroke="#000" stroke-width="1.1"/><line x1="1717.5" y1="232.9" x2="1725.5" y2="232.9" stroke="#000" stroke-width="2"/><line x1="1731.5" y1="265.5" x2="1731.5" y2="278.7" stroke="#000" stroke-width="1.1"/><rect x="1728.5" y="241.2" width="6" height="24.3" fill="#ff3434" stroke="#000" stroke-width="1"/><line x1="1741.5" y1="273.2" x2="1741.5" y2="303.3" stroke="#000" stroke-width="1.1"/><rect x="1738.5" y="303.3" width="6" height="16.3" fill="#ff3434" stroke="#000" stroke-width="1"/><line x1="1750.5" y1="294.5" x2="1750.5" y2="299.3" stroke="#000" stroke-width="1.1"/><rect x="1747.5" y="299.3" width="6" height="18.1" fill="#33e833" stroke="#000" stroke-width="1"/><line x1="1760.5" y1="279.5" x2="1760.5" y2="285.3" stroke="#000" stroke-width="1.1"/><line x1="1760.5" y1="298.5" x2="1760.5" y2="301.5" stroke="#000" stroke-width="1.1"/><rect x="1757.5" y="285.3" width="6" height="13.2" fill="#ff3434" stroke="#000" stroke-width="1"/><line x1="1770.5" y1="242.1" x2="1770.5" y2="249.7" stroke="#000" stroke-width="1.1"/><line x1="1770.5" y1="303.3" x2="1770.5" y2="309.9" stroke="#000" stroke-width="1.1"/><rect x="1767.5" y="249.7" width="6" height="53.6" fill="#33e833" stroke="#000" stroke-width="1"/><line x1="1780.5" y1="249.4" x2="1780.5" y2="274.5" stroke="#000" stroke-width="1.1"/><rect x="1777.5" y="242.5" width="6" height="6.9" fill="#ff3434" stroke="#000" stroke-width="1"/><line x1="1790.5" y1="205.8" x2="1790.5" y2="259.7" stroke="#000" stroke-width="1.1"/><rect x="1787.5" y="259.7" width="6" height="2.6" fill="#33e833" stroke="#000" stroke-width="1"/><rect x="1797.5" y="261.7" width="6" height="48.7" fill="#ff3434" stroke="#000" stroke-width="1"/><line x1="1810.5" y1="280.4" x2="1810.5" y2="285.3" stroke="#000" stroke-width="1.1"/><rect x="1807.5" y="285.3" width="6" height="18.0" fill="#33e833" stroke="#000" stroke-width="1"/><line x1="1819.5" y1="271.8" x2="1819.5" y2="276.5" stroke="#000" stroke-width="1.1"/><line x1="1819.5" y1="282.4" x2="1819.5" y2="299.6" stroke="#000" stroke-width="1.1"/><rect x="1816.5" y="276.5" width="6" height="5.9" fill="#33e833" stroke="#000" stroke-width="1"/><line x1="1829.5" y1="258.6" x2="1829.5" y2="261.0" stroke="#000" stroke-width="1.1"/><line x1="1825.5" y1="260.0" x2="1833.5" y2="260.0" stroke="#000" stroke-width="2"/><line x1="1839.5" y1="207.2" x2="1839.5" y2="218.4" stroke="#000" stroke-width="1.1"/><line x1="1839.5" y1="267.6" x2="1839.5" y2="285.7" stroke="#000" stroke-width="1.1"/><rect x="1836.5" y="218.4" width="6" height="49.2" fill="#33e833" stroke="#000" stroke-width="1"/><rect x="1846.5" y="144.5" width="6" height="69.7" fill="#33e833" stroke="#000" stroke-width="1"/><path d="M1860 144.5 L1866 134 H1899 V155 H1866Z" fill="#333"/><text x="1869" y="148.5" font-size="10" font-weight="bold" fill="#fff" font-family="Liberation Sans" letter-spacing="1.2">1295.20</text><line x1="1527" y1="178.5" x2="1778" y2="158" stroke="#ff7f3f" stroke-width="3.2" stroke-linecap="round"/><path d="M1789 156.6 L1774 153 L1776 162.5Z" fill="#ff7f3f"/><line x1="1624.4" y1="343.5" x2="1623.4" y2="366" stroke="#ff7f3f" stroke-width="3" stroke-linecap="round"/><line x1="1852.6" y1="225" x2="1850.4" y2="269" stroke="#ff7f3f" stroke-width="3" stroke-linecap="round"/></svg>
<div class="a" style="left:9px;top:810px;width:1895px;height:210px;border:1px solid #a9b0b4;border-bottom:1.5px solid #8e9aa1;border-radius:3px 3px 0 0;box-shadow:0 2px 2px -1px rgba(0,0,0,.18)"></div>
<div class="a" style="left:12px;top:831px;width:1857px;height:183px;border:1px solid #c9cdd0"></div>
<svg class="a" style="left:16px;top:815px" width="14" height="9"><rect x="0" y="0" width="1" height="3" fill="#000"/><rect x="1" y="4" width="9" height="4" fill="#000"/></svg>
<div class="a" style="left:36px;top:815px;font-size:10.5px;font-weight:bold;color:#123a44;line-height:12px;letter-spacing:0.85px">Rsi(14):67.30</div>
<svg class="a" style="left:136px;top:815px" width="14" height="9"><rect x="0" y="0" width="1" height="3" fill="#1a6a3a"/><rect x="1" y="4" width="9" height="4" fill="#1a6a3a"/></svg>
<div class="a" style="left:156px;top:815px;font-size:10.5px;font-weight:bold;color:#123a44;line-height:12px;letter-spacing:0.85px">MA(9):55.45</div>
<div class="a" style="left:1868px;top:815px;width:13px;height:13px;border:1px solid #999;border-radius:3px;background:linear-gradient(#fff,#ddd)"><div style="position:absolute;left:2px;top:8px;width:8px;height:2px;background:#000;border-radius:1px"></div></div>
<div class="a" style="left:1890px;top:815px;width:14px;height:13px;border:1px solid #999;border-radius:3px;background:linear-gradient(#fff,#ddd)"><svg style="position:absolute;left:1px;top:1px" width="11" height="10"><path d="M2 1L9 9M9 1L2 9" stroke="#000" stroke-width="2.5"/></svg></div>
<svg class="a" style="left:0;top:0" width="1899" height="1061" viewBox="0 0 1899 1061"><rect x="22" y="837" width="1832" height="6" fill="url(#gtop)"/><rect x="22" y="1003" width="1832" height="10" fill="url(#gbot)"/><rect x="22" y="837" width="8" height="176" fill="url(#gleft)"/><line x1="22" y1="837.5" x2="1854" y2="837.5" stroke="#d6d6d6" stroke-width="1"/><line x1="22" y1="862.5" x2="1854" y2="862.5" stroke="#d6d6d6" stroke-width="1"/><line x1="22" y1="887.5" x2="1854" y2="887.5" stroke="#d6d6d6" stroke-width="1"/><line x1="22" y1="912.5" x2="1854" y2="912.5" stroke="#d6d6d6" stroke-width="1"/><line x1="22" y1="962.5" x2="1854" y2="962.5" stroke="#d6d6d6" stroke-width="1"/><line x1="22" y1="987.5" x2="1854" y2="987.5" stroke="#d6d6d6" stroke-width="1"/><line x1="22" y1="937.5" x2="1854" y2="937.5" stroke="#ee3333" stroke-width="1" stroke-dasharray="1.5 1.5"/><text x="1875.5" y="837.7" font-size="8.6" fill="#2e4a52" font-family="Liberation Sans">90</text><text x="1875.5" y="862.8" font-size="8.6" fill="#2e4a52" font-family="Liberation Sans">80</text><text x="1875.5" y="887.8" font-size="8.6" fill="#2e4a52" font-family="Liberation Sans">70</text><text x="1875.5" y="912.9" font-size="8.6" fill="#2e4a52" font-family="Liberation Sans">60</text><text x="1875.5" y="937.9" font-size="8.6" fill="#2e4a52" font-family="Liberation Sans">50</text><text x="1875.5" y="962.9" font-size="8.6" fill="#2e4a52" font-family="Liberation Sans">40</text><text x="1875.5" y="988.0" font-size="8.6" fill="#2e4a52" font-family="Liberation Sans">30</text><text x="1875.5" y="1013.0" font-size="8.6" fill="#2e4a52" font-family="Liberation Sans">20</text><polyline points="27.0,955.0 36.9,948.2 46.7,942.0 56.6,933.2 66.4,925.7 76.3,920.2 86.1,919.9 96.0,919.9 105.8,919.9 115.7,919.4 125.5,918.9 135.4,919.1 145.2,923.0 155.1,928.7 164.9,933.7 174.8,936.3 184.6,937.2 194.5,937.7 204.3,942.0 214.2,944.8 224.0,949.1 233.9,951.9 243.7,954.0 253.6,953.1 263.4,952.4 273.3,949.0 283.1,946.5 293.0,942.7 302.8,939.4 312.7,933.0 322.5,928.5 332.4,925.2 342.2,925.2 352.1,926.1 361.9,929.9 371.8,930.2 381.6,929.3 391.5,928.4 401.3,929.5 411.2,930.1 421.0,927.7 430.9,923.9 440.7,918.7 450.6,912.1 460.4,907.7 470.3,904.0 480.1,903.0 490.0,901.7 499.8,901.4 509.7,902.6 519.6,905.0 529.4,907.0 539.3,910.3 549.1,912.9 559.0,919.0 568.8,924.1 578.7,930.3 588.5,936.8 598.4,943.7 608.2,950.3 618.1,958.5 627.9,966.6 637.8,975.9 647.6,981.2 657.5,986.1 667.3,990.4 677.2,992.1 687.0,994.4 696.9,996.5 706.7,995.4 716.6,994.5 726.4,994.6 736.3,992.8 746.1,991.1 756.0,989.3 765.8,989.5 775.7,986.6 785.5,983.8 795.4,984.1 805.2,982.7 815.1,976.7 824.9,973.4 834.8,969.7 844.6,965.9 854.5,961.2 864.3,958.0 874.2,956.2 884.0,953.7 893.9,950.2 903.7,953.3 913.6,953.3 923.4,951.6 933.3,950.8 943.1,950.0 953.0,948.9 962.8,947.0 972.7,943.9 982.5,945.3 992.4,943.6 1002.2,942.3 1012.1,942.3 1022.0,940.0 1031.8,935.9 1041.7,933.9 1051.5,931.3 1061.4,930.9 1071.2,928.4 1081.1,927.5 1090.9,926.4 1100.8,925.9 1110.6,927.1 1120.5,929.5 1130.3,928.8 1140.2,929.0 1150.0,928.2 1159.9,926.6 1169.7,921.9 1179.6,920.0 1189.4,918.1 1199.3,915.8 1209.1,912.5 1219.0,911.2 1228.8,907.5 1238.7,902.3 1248.5,898.1 1258.4,893.3 1268.2,887.6 1278.1,882.5 1287.9,875.7 1297.8,871.4 1307.6,867.6 1317.5,868.3 1327.3,870.3 1337.2,872.0 1347.0,875.0 1356.9,877.8 1366.7,882.4 1376.6,888.1 1386.4,891.6 1396.3,894.3 1406.1,896.0 1416.0,896.8 1425.8,898.1 1435.7,899.6 1445.5,900.3 1455.4,897.8 1465.2,897.0 1475.1,897.3 1484.9,898.2 1494.8,896.0 1504.7,896.4 1514.5,898.0 1524.4,901.7 1534.2,906.5 1544.1,909.2 1553.9,912.1 1563.8,915.8 1573.6,918.5 1583.5,924.4 1593.3,928.7 1603.2,931.9 1613.0,933.3 1622.9,933.1 1632.7,936.5 1642.6,938.2 1652.4,940.0 1662.3,942.6 1672.1,941.9 1682.0,941.6 1691.8,939.5 1701.7,937.2 1711.5,935.1 1721.4,931.9 1731.2,931.0 1741.1,931.2 1750.9,930.1 1760.8,930.1 1770.6,927.7 1780.5,926.7 1790.3,926.7 1800.2,930.2 1810.0,932.9 1819.9,933.7 1829.7,931.6 1839.6,928.8 1849.4,923.9" fill="none" stroke="#1f7a45" stroke-width="1.2"/><polyline points="27.0,933.6 36.9,935.5 46.7,920.8 56.6,895.9 66.4,890.6 76.3,901.0 86.1,922.6 96.0,938.6 105.8,940.7 115.7,928.8 125.5,930.9 135.4,922.8 145.2,931.2 155.1,941.9 164.9,945.6 174.8,946.2 184.6,946.4 194.5,945.4 204.3,967.7 214.2,955.6 224.0,962.3 233.9,955.6 243.7,961.4 253.6,937.3 263.4,940.1 273.3,915.9 283.1,922.6 293.0,933.4 302.8,925.7 312.7,905.2 322.5,915.2 332.4,931.5 342.2,936.7 352.1,948.5 361.9,950.0 371.8,925.8 381.6,925.1 391.5,917.0 401.3,915.2 411.2,920.6 421.0,910.1 430.9,902.7 440.7,901.9 450.6,890.8 460.4,885.6 470.3,892.2 480.1,907.7 490.0,903.6 499.8,918.2 509.7,920.3 519.6,924.5 529.4,920.3 539.3,920.3 549.1,908.7 559.0,947.8 568.8,953.4 578.7,959.1 588.5,976.9 598.4,982.2 608.2,983.6 618.1,994.1 627.9,993.3 637.8,992.7 647.6,995.2 657.5,997.8 667.3,997.8 677.2,992.1 687.0,1002.7 696.9,1002.4 706.7,984.2 716.6,985.5 726.4,993.5 736.3,978.9 746.1,982.6 756.0,981.8 765.8,994.3 775.7,975.9 785.5,977.9 795.4,986.5 805.2,972.6 815.1,940.1 824.9,949.1 834.8,949.1 844.6,947.4 854.5,952.6 864.3,947.2 874.2,961.6 884.0,963.8 893.9,940.8 903.7,968.3 913.6,949.2 923.4,933.4 933.3,940.4 943.1,945.4 953.0,937.3 962.8,943.9 972.7,936.5 982.5,953.6 992.4,953.1 1002.2,936.7 1012.1,933.4 1022.0,920.4 1031.8,907.8 1041.7,919.4 1051.5,920.7 1061.4,932.8 1071.2,930.8 1081.1,945.2 1090.9,927.6 1100.8,928.9 1110.6,931.1 1120.5,929.4 1130.3,912.8 1140.2,922.8 1150.0,925.2 1159.9,916.2 1169.7,903.1 1179.6,910.8 1189.4,911.1 1199.3,910.4 1209.1,899.8 1219.0,901.1 1228.8,889.5 1238.7,878.6 1248.5,878.6 1258.4,859.6 1268.2,859.4 1278.1,865.9 1287.9,849.1 1297.8,860.4 1307.6,867.5 1317.5,895.7 1327.3,896.2 1337.2,894.5 1347.0,886.5 1356.9,884.5 1366.7,907.7 1376.6,900.1 1386.4,891.5 1396.3,891.9 1406.1,911.2 1416.0,902.9 1425.8,906.5 1435.7,900.0 1445.5,891.2 1455.4,885.1 1465.2,892.7 1475.1,894.2 1484.9,900.3 1494.8,891.2 1504.7,906.3 1514.5,920.9 1524.4,933.6 1534.2,934.3 1544.1,909.4 1553.9,918.8 1563.8,927.6 1573.6,924.3 1583.5,943.9 1593.3,945.7 1603.2,949.3 1613.0,946.3 1622.9,932.6 1632.7,940.2 1642.6,933.6 1652.4,944.0 1662.3,947.6 1672.1,937.9 1682.0,942.9 1691.8,930.4 1701.7,925.3 1711.5,913.8 1721.4,911.6 1731.2,925.8 1741.1,945.5 1750.9,938.2 1760.8,937.9 1770.6,921.2 1780.5,921.1 1790.3,925.6 1800.2,945.2 1810.0,935.8 1819.9,932.5 1829.7,926.5 1839.6,912.9 1849.4,894.2" fill="none" stroke="#1a1a1a" stroke-width="1.2"/><line x1="1496" y1="875" x2="1794" y2="892.7" stroke="#ff7f3f" stroke-width="3" stroke-linecap="round"/><path d="M1806.5 893.5 L1792 888.3 L1793 897.5Z" fill="#ff7f3f"/><text x="1600" y="957.5" font-size="19" fill="#c8c8c8" font-family="Liberation Sans" letter-spacing="0.4">Activate Windows</text><text x="1600" y="978.5" font-size="14" fill="#c8c8c8" font-family="Liberation Sans" letter-spacing="0.45">Go to Settings to activate Windows.</text></svg>
<div class="a" style="left:9px;top:1025px;width:1895px;height:36px;border:1px solid #a9b0b4;border-bottom:1.5px solid #8e9aa1;border-radius:3px 3px 0 0"></div>
<div class="a" style="left:12px;top:1028px;width:1857px;height:28px;border:1px solid #c9cdd0"></div>
<svg class="a" style="left:0;top:0" width="1899" height="1061" viewBox="0 0 1899 1061"><rect x="13" y="1029" width="1157" height="26" fill="#f0f0f0"/><rect x="13" y="1029" width="10" height="26" fill="#fff"/><polygon points="23,1055 23.0,1036.8 35.0,1034.7 48.0,1036.0 52.0,1031.6 80.0,1031.4 110.0,1029.5 120.0,1033.0 126.0,1031.6 162.0,1034.5 176.0,1032.0 200.0,1032.3 218.0,1035.0 240.0,1033.7 250.0,1036.0 282.0,1038.5 300.0,1039.5 326.0,1040.0 334.0,1042.5 350.0,1039.5 380.0,1038.0 390.0,1038.6 399.8,1039.6 408.0,1043.5 419.4,1045.5 426.0,1043.5 440.6,1044.5 445.5,1042.2 471.6,1041.5 481.4,1042.2 484.7,1039.6 501.0,1041.9 507.5,1039.0 520.6,1040.2 527.0,1041.5 546.7,1043.2 559.8,1041.9 572.8,1042.9 585.9,1039.6 602.2,1035.7 618.5,1034.4 628.3,1033.0 651.2,1034.7 667.5,1038.0 683.8,1039.0 693.6,1039.6 703.4,1041.2 719.7,1041.2 729.5,1040.2 739.3,1041.5 745.8,1043.5 768.7,1044.8 775.2,1042.9 798.0,1041.2 807.9,1042.9 821.0,1039.6 847.0,1041.2 863.4,1040.2 873.2,1042.9 883.0,1039.6 889.5,1042.9 899.3,1042.2 925.4,1039.0 951.5,1041.5 984.2,1043.5 1000.0,1042.6 1020.0,1040.0 1040.0,1042.8 1062.0,1043.5 1090.0,1046.0 1112.0,1050.4 1140.0,1049.8 1160.0,1047.5 1170.0,1048.0 1170,1055" fill="#d8dcea"/><polyline points="23.0,1036.8 35.0,1034.7 48.0,1036.0 52.0,1031.6 80.0,1031.4 110.0,1029.5 120.0,1033.0 126.0,1031.6 162.0,1034.5 176.0,1032.0 200.0,1032.3 218.0,1035.0 240.0,1033.7 250.0,1036.0 282.0,1038.5 300.0,1039.5 326.0,1040.0 334.0,1042.5 350.0,1039.5 380.0,1038.0 390.0,1038.6 399.8,1039.6 408.0,1043.5 419.4,1045.5 426.0,1043.5 440.6,1044.5 445.5,1042.2 471.6,1041.5 481.4,1042.2 484.7,1039.6 501.0,1041.9 507.5,1039.0 520.6,1040.2 527.0,1041.5 546.7,1043.2 559.8,1041.9 572.8,1042.9 585.9,1039.6 602.2,1035.7 618.5,1034.4 628.3,1033.0 651.2,1034.7 667.5,1038.0 683.8,1039.0 693.6,1039.6 703.4,1041.2 719.7,1041.2 729.5,1040.2 739.3,1041.5 745.8,1043.5 768.7,1044.8 775.2,1042.9 798.0,1041.2 807.9,1042.9 821.0,1039.6 847.0,1041.2 863.4,1040.2 873.2,1042.9 883.0,1039.6 889.5,1042.9 899.3,1042.2 925.4,1039.0 951.5,1041.5 984.2,1043.5 1000.0,1042.6 1020.0,1040.0 1040.0,1042.8 1062.0,1043.5 1090.0,1046.0 1112.0,1050.4 1140.0,1049.8 1160.0,1047.5 1170.0,1048.0" fill="none" stroke="#a9b6e0" stroke-width="1.5"/><polygon points="1170,1055 1170.0,1048.0 1173.7,1048.1 1177.4,1047.2 1181.0,1045.2 1184.7,1044.7 1188.4,1045.2 1192.1,1046.4 1195.7,1047.5 1199.4,1047.7 1203.1,1046.8 1206.8,1046.9 1210.4,1046.3 1214.1,1046.9 1217.8,1047.6 1221.5,1047.8 1225.1,1047.9 1228.8,1047.9 1232.5,1047.8 1236.2,1049.3 1239.8,1048.7 1243.5,1049.2 1247.2,1048.8 1250.9,1049.2 1254.5,1047.9 1258.2,1048.1 1261.9,1046.4 1265.6,1046.8 1269.2,1047.5 1272.9,1046.9 1276.6,1045.2 1280.3,1045.8 1283.9,1046.9 1287.6,1047.3 1291.3,1048.2 1295.0,1048.3 1298.6,1046.5 1302.3,1046.4 1306.0,1045.7 1309.7,1045.5 1313.4,1045.9 1317.0,1045.0 1320.7,1044.3 1324.4,1044.2 1328.1,1043.0 1331.7,1042.4 1335.4,1042.7 1339.1,1043.6 1342.8,1043.2 1346.4,1044.0 1350.1,1044.1 1353.8,1044.4 1357.5,1044.1 1361.1,1044.1 1364.8,1043.3 1368.5,1045.7 1372.2,1046.1 1375.8,1046.6 1379.5,1048.3 1383.2,1049.0 1386.9,1049.1 1390.5,1050.5 1394.2,1050.4 1397.9,1050.4 1401.6,1050.7 1405.2,1051.0 1408.9,1051.0 1412.6,1050.8 1416.3,1052.0 1419.9,1052.0 1423.6,1051.3 1427.3,1051.4 1431.0,1052.1 1434.6,1051.5 1438.3,1051.9 1442.0,1051.8 1445.7,1053.0 1449.4,1052.2 1453.0,1052.4 1456.7,1053.1 1460.4,1052.5 1464.1,1050.7 1467.7,1051.4 1471.4,1051.4 1475.1,1051.3 1478.8,1051.6 1482.4,1051.3 1486.1,1052.3 1489.8,1052.5 1493.5,1051.2 1497.1,1053.4 1500.8,1052.2 1504.5,1050.9 1508.2,1051.5 1511.8,1051.9 1515.5,1051.3 1519.2,1051.8 1522.9,1051.3 1526.5,1052.7 1530.2,1052.7 1533.9,1051.5 1537.6,1051.2 1541.2,1050.1 1544.9,1048.9 1548.6,1049.7 1552.3,1049.8 1555.9,1050.6 1559.6,1050.5 1563.3,1051.6 1567.0,1050.1 1570.6,1050.2 1574.3,1050.4 1578.0,1050.3 1581.7,1048.9 1585.4,1049.5 1589.0,1049.7 1592.7,1049.0 1596.4,1047.7 1600.1,1048.2 1603.7,1048.2 1607.4,1048.1 1611.1,1047.2 1614.8,1047.3 1618.4,1046.1 1622.1,1044.8 1625.8,1044.8 1629.5,1041.6 1633.1,1041.5 1636.8,1041.9 1640.5,1037.6 1644.2,1038.3 1647.8,1038.7 1651.5,1040.8 1655.2,1040.8 1658.9,1040.5 1662.5,1039.3 1666.2,1039.0 1669.9,1040.7 1673.6,1039.6 1677.2,1038.3 1680.9,1038.3 1684.6,1039.8 1688.3,1038.7 1691.9,1039.0 1695.6,1038.1 1699.3,1036.8 1703.0,1035.8 1706.6,1036.4 1710.3,1036.5 1714.0,1036.9 1717.7,1035.7 1721.4,1036.7 1725.0,1037.9 1728.7,1039.0 1732.4,1039.1 1736.1,1036.3 1739.7,1037.1 1743.4,1037.9 1747.1,1037.5 1750.8,1039.5 1754.4,1039.7 1758.1,1040.1 1761.8,1039.8 1765.5,1038.6 1769.1,1039.3 1772.8,1038.7 1776.5,1039.6 1780.2,1040.0 1783.8,1039.2 1787.5,1039.6 1791.2,1038.5 1794.9,1038.0 1798.5,1036.9 1802.2,1036.6 1805.9,1037.7 1809.6,1039.4 1813.2,1038.8 1816.9,1038.7 1820.6,1037.2 1824.3,1037.2 1827.9,1037.5 1831.6,1039.1 1835.3,1038.3 1839.0,1038.0 1842.6,1037.5 1846.3,1036.2 1850.0,1033.8 1850,1055" fill="#7f9be4"/><polyline points="1170.0,1048.0 1173.7,1048.1 1177.4,1047.2 1181.0,1045.2 1184.7,1044.7 1188.4,1045.2 1192.1,1046.4 1195.7,1047.5 1199.4,1047.7 1203.1,1046.8 1206.8,1046.9 1210.4,1046.3 1214.1,1046.9 1217.8,1047.6 1221.5,1047.8 1225.1,1047.9 1228.8,1047.9 1232.5,1047.8 1236.2,1049.3 1239.8,1048.7 1243.5,1049.2 1247.2,1048.8 1250.9,1049.2 1254.5,1047.9 1258.2,1048.1 1261.9,1046.4 1265.6,1046.8 1269.2,1047.5 1272.9,1046.9 1276.6,1045.2 1280.3,1045.8 1283.9,1046.9 1287.6,1047.3 1291.3,1048.2 1295.0,1048.3 1298.6,1046.5 1302.3,1046.4 1306.0,1045.7 1309.7,1045.5 1313.4,1045.9 1317.0,1045.0 1320.7,1044.3 1324.4,1044.2 1328.1,1043.0 1331.7,1042.4 1335.4,1042.7 1339.1,1043.6 1342.8,1043.2 1346.4,1044.0 1350.1,1044.1 1353.8,1044.4 1357.5,1044.1 1361.1,1044.1 1364.8,1043.3 1368.5,1045.7 1372.2,1046.1 1375.8,1046.6 1379.5,1048.3 1383.2,1049.0 1386.9,1049.1 1390.5,1050.5 1394.2,1050.4 1397.9,1050.4 1401.6,1050.7 1405.2,1051.0 1408.9,1051.0 1412.6,1050.8 1416.3,1052.0 1419.9,1052.0 1423.6,1051.3 1427.3,1051.4 1431.0,1052.1 1434.6,1051.5 1438.3,1051.9 1442.0,1051.8 1445.7,1053.0 1449.4,1052.2 1453.0,1052.4 1456.7,1053.1 1460.4,1052.5 1464.1,1050.7 1467.7,1051.4 1471.4,1051.4 1475.1,1051.3 1478.8,1051.6 1482.4,1051.3 1486.1,1052.3 1489.8,1052.5 1493.5,1051.2 1497.1,1053.4 1500.8,1052.2 1504.5,1050.9 1508.2,1051.5 1511.8,1051.9 1515.5,1051.3 1519.2,1051.8 1522.9,1051.3 1526.5,1052.7 1530.2,1052.7 1533.9,1051.5 1537.6,1051.2 1541.2,1050.1 1544.9,1048.9 1548.6,1049.7 1552.3,1049.8 1555.9,1050.6 1559.6,1050.5 1563.3,1051.6 1567.0,1050.1 1570.6,1050.2 1574.3,1050.4 1578.0,1050.3 1581.7,1048.9 1585.4,1049.5 1589.0,1049.7 1592.7,1049.0 1596.4,1047.7 1600.1,1048.2 1603.7,1048.2 1607.4,1048.1 1611.1,1047.2 1614.8,1047.3 1618.4,1046.1 1622.1,1044.8 1625.8,1044.8 1629.5,1041.6 1633.1,1041.5 1636.8,1041.9 1640.5,1037.6 1644.2,1038.3 1647.8,1038.7 1651.5,1040.8 1655.2,1040.8 1658.9,1040.5 1662.5,1039.3 1666.2,1039.0 1669.9,1040.7 1673.6,1039.6 1677.2,1038.3 1680.9,1038.3 1684.6,1039.8 1688.3,1038.7 1691.9,1039.0 1695.6,1038.1 1699.3,1036.8 1703.0,1035.8 1706.6,1036.4 1710.3,1036.5 1714.0,1036.9 1717.7,1035.7 1721.4,1036.7 1725.0,1037.9 1728.7,1039.0 1732.4,1039.1 1736.1,1036.3 1739.7,1037.1 1743.4,1037.9 1747.1,1037.5 1750.8,1039.5 1754.4,1039.7 1758.1,1040.1 1761.8,1039.8 1765.5,1038.6 1769.1,1039.3 1772.8,1038.7 1776.5,1039.6 1780.2,1040.0 1783.8,1039.2 1787.5,1039.6 1791.2,1038.5 1794.9,1038.0 1798.5,1036.9 1802.2,1036.6 1805.9,1037.7 1809.6,1039.4 1813.2,1038.8 1816.9,1038.7 1820.6,1037.2 1824.3,1037.2 1827.9,1037.5 1831.6,1039.1 1835.3,1038.3 1839.0,1038.0 1842.6,1037.5 1846.3,1036.2 1850.0,1033.8" fill="none" stroke="#0f30c8" stroke-width="2"/><line x1="23" y1="1054.5" x2="1850" y2="1054.5" stroke="#a9b6e0" stroke-width="1"/><rect x="1171.5" y="1033.5" width="8" height="15" rx="2.5" fill="#fff" stroke="#666" stroke-width="1"/><line x1="1174.5" y1="1036" x2="1174.5" y2="1046" stroke="#222" stroke-width="1"/><line x1="1177.0" y1="1036" x2="1177.0" y2="1046" stroke="#222" stroke-width="1"/><rect x="1844.5" y="1033.5" width="8" height="15" rx="2.5" fill="#fff" stroke="#666" stroke-width="1"/><line x1="1847.5" y1="1036" x2="1847.5" y2="1046" stroke="#222" stroke-width="1"/><line x1="1850.0" y1="1036" x2="1850.0" y2="1046" stroke="#222" stroke-width="1"/></svg>
<div class="dt" style="left:15.0px">08/17/2015</div>
<div class="dt" style="left:96.0px">08/31/2015</div>
<div class="dt" style="left:184.6px">09/10/2015</div>
<div class="dt" style="left:273.2px">09/23/2015</div>
<div class="dt" style="left:361.8px">10/06/2015</div>
<div class="dt" style="left:450.4px">10/19/2015</div>
<div class="dt" style="left:539.0px">10/30/2015</div>
<div class="dt" style="left:627.6px">11/12/2015</div>
<div class="dt" style="left:716.2px">11/25/2015</div>
<div class="dt" style="left:804.8px">12/08/2015</div>
<div class="dt" style="left:893.4px">12/21/2015</div>
<div class="dt" style="left:982.0px">01/05/2016</div>
<div class="dt" style="left:1070.6px">01/17/2016</div>
<div class="dt" style="left:1159.2px">01/28/2016</div>
<div class="dt" style="left:1247.8px">02/10/2016</div>
<div class="dt" style="left:1336.4px">02/22/2016</div>
<div class="dt" style="left:1425.0px">03/04/2016</div>
<div class="dt" style="left:1513.6px">03/17/2016</div>
<div class="dt" style="left:1602.2px">03/30/2016</div>
<div class="dt" style="left:1690.8px">04/12/2016</div>
<div class="dt" style="left:1826.5px">04/29/2016</div>
<svg class="a" style="left:0;top:0" width="1899" height="1061" viewBox="0 0 1899 1061"><text x="29" y="765.5" font-size="47.5" font-weight="bold" fill="#ababab" font-family="Liberation Sans" letter-spacing="-0.4">Invest&#305;ng</text><text x="231" y="765.5" font-size="32.5" fill="#ababab" font-family="Liberation Sans">.com</text><path d="M165 730 L173 727.5 L173 735 L165 737.5Z" fill="#f6c98a"/></svg>
</body></html>
